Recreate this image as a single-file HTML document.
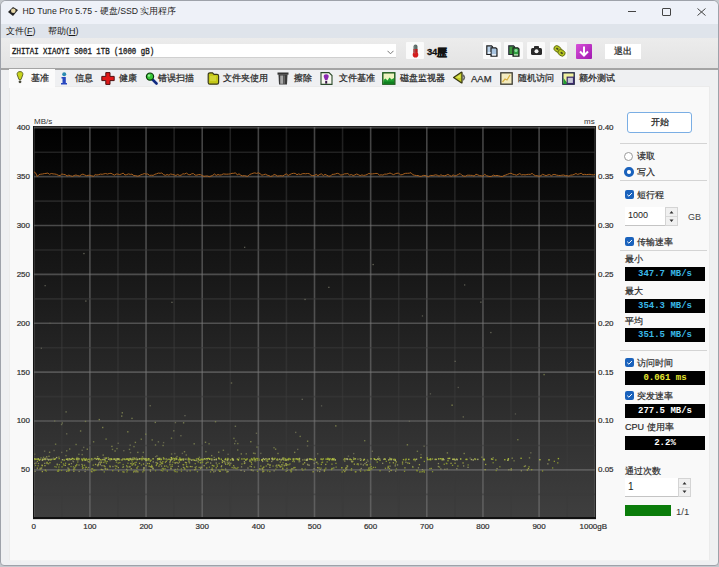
<!DOCTYPE html>
<html><head><meta charset="utf-8">
<style>
*{box-sizing:border-box}
html,body{margin:0;padding:0;width:719px;height:567px;overflow:hidden;background:#c4c8cd}
body{font-family:"Liberation Sans",sans-serif;font-size:9px;color:#1a1a1a;position:relative}
.a{position:absolute;white-space:nowrap}
#frame{position:absolute;left:0;top:0;width:719px;height:566px;border:1px solid #9ea2aa;border-radius:6px 6px 4px 4px;overflow:hidden;background:#eff0f2}
#title{position:absolute;left:0;top:0;width:719px;height:23px;background:#eef1f8}
#menu{position:absolute;left:0;top:23px;width:719px;height:14px;background:#dfe4eb}
#tool{position:absolute;left:0;top:37px;width:719px;height:30px;background:linear-gradient(#ececec,#e3e3e3)}
#tabline{position:absolute;left:0;top:66.5px;width:719px;height:2px;background:#a4a4a4}
.tbtn{position:absolute;top:42px;height:17px;background:#fafafa;border-radius:1px}
.yl{position:absolute;left:0;width:30px;text-align:right;font-size:8px;color:#2e2e2e;-webkit-text-stroke:0.2px #2e2e2e}
.yr{position:absolute;left:598px;font-size:8px;color:#2e2e2e;-webkit-text-stroke:0.2px #2e2e2e}
.xl{position:absolute;top:522px;width:60px;text-align:center;font-size:8px;color:#2e2e2e;-webkit-text-stroke:0.2px #2e2e2e}
.box{position:absolute;left:625px;width:80px;height:14px;background:#000;font-family:"Liberation Mono",monospace;font-weight:bold;font-size:9px;text-align:center;line-height:14px}
.lbl{position:absolute;left:625px;font-size:9px;color:#2a2a2a;-webkit-text-stroke:0.2px #2a2a2a}
.cb{position:absolute;left:625px;width:9px;height:9px;background:#1a62bc;border-radius:2px}
.cb svg{position:absolute;left:0;top:0}
.sep{position:absolute;left:620px;width:87px;height:1px;background:#d4d4d4}
.tab{position:absolute;top:72px;font-size:9px;color:#2a2a2a;-webkit-text-stroke:0.25px #2a2a2a}
</style></head><body>
<div id="frame">
<div id="title"></div>
<div id="menu"></div>
<div id="tool"></div>
<div id="tabline"></div>
</div>
<!-- title -->
<svg class="a" style="left:7px;top:6px" width="12" height="11" viewBox="0 0 12 11"><path d="M1 6 L6 1 L11 4 L6 10 Z" fill="#222"/><circle cx="6.3" cy="4.8" r="2.3" fill="#e8d8a8"/></svg>
<div class="a" style="left:22.5px;top:6.3px;font-size:8.7px;color:#1e1e1e">HD Tune Pro 5.75 - 硬盘/SSD 实用程序</div>
<div class="a" style="left:628px;top:11px;width:8px;height:1px;background:#444"></div>
<div class="a" style="left:662px;top:8px;width:9px;height:8px;border:1px solid #444;border-radius:1px"></div>
<svg class="a" style="left:697px;top:8px" width="9" height="8"><path d="M0.5 0.5 L8.5 7.5 M8.5 0.5 L0.5 7.5" stroke="#444" stroke-width="1"/></svg>
<!-- menu -->
<div class="a" style="left:6px;top:24.5px;font-size:9px">文件(<u>F</u>)</div>
<div class="a" style="left:48px;top:24.5px;font-size:9px">帮助(<u>H</u>)</div>
<!-- toolbar -->
<div class="a" style="left:10px;top:44px;width:386px;height:14px;background:#fff;border-bottom:1px solid #d0d0d0"></div>
<div class="a" style="left:11.5px;top:47px;font-family:'Liberation Mono',monospace;font-size:9px;transform:scaleX(0.822);transform-origin:0 0;color:#222;-webkit-text-stroke:0.35px #222">ZHITAI XIAOYI S001 1TB (1000 gB)</div>
<svg class="a" style="left:387px;top:50px" width="7" height="5"><path d="M0.5 0.8 L3.5 3.8 L6.5 0.8" stroke="#777" fill="none"/></svg>
<div class="tbtn" style="left:406px;width:18px"></div>
<svg class="a" style="left:411px;top:44px" width="9" height="14" viewBox="0 0 9 14"><rect x="2.5" y="0.5" width="4" height="9" rx="2" fill="#5a6a66"/><rect x="2.5" y="5" width="4" height="5" fill="#c01818"/><circle cx="4.5" cy="10.8" r="2.8" fill="#d41c1c"/><rect x="3.3" y="1.5" width="1" height="8" fill="#8a9a96" opacity="0.6"/></svg>
<div class="a" style="left:427px;top:46px;font-weight:bold;font-size:9.5px;color:#111;letter-spacing:-0.2px;-webkit-text-stroke:0.3px #111">34</div>
<div class="a" style="left:436.5px;top:45.5px;font-size:10px;font-weight:bold;color:#111;-webkit-text-stroke:0.45px #111">歷</div>
<div class="tbtn" style="left:483px;width:18px"></div>
<svg class="a" style="left:486px;top:45px" width="12" height="12" viewBox="0 0 12 12"><path d="M0.8 0.8 H5.5 L6.5 1.8 V9.5 H0.8 Z" fill="#b8d0e8" stroke="#222" stroke-width="1.2"/><path d="M5 2.8 H9.8 L11 4 V11.2 H5 Z" fill="#a8c4e0" stroke="#222" stroke-width="1.2"/><rect x="6" y="9.3" width="4" height="1.2" fill="#fff"/><rect x="1.8" y="7.3" width="3" height="1" fill="#fff"/></svg>
<div class="tbtn" style="left:504px;width:19px"></div>
<svg class="a" style="left:508px;top:45px" width="12" height="12" viewBox="0 0 12 12"><path d="M0.8 0.8 H5.5 L6.5 1.8 V9.5 H0.8 Z" fill="#3c9a3c" stroke="#2a2a3a" stroke-width="1.2"/><path d="M5 2.8 H9.8 L11 4 V11.2 H5 Z" fill="#30a040" stroke="#222" stroke-width="1.2"/><circle cx="8" cy="5.5" r="1.5" fill="#8fe0a0"/><rect x="6" y="9.3" width="4" height="1.2" fill="#cfe8c8"/></svg>
<div class="tbtn" style="left:527px;width:18px"></div>
<svg class="a" style="left:531px;top:46px" width="11" height="9" viewBox="0 0 11 9"><rect x="0" y="2" width="11" height="7" rx="1.5" fill="#2a2a2a"/><rect x="3" y="0" width="5" height="3" rx="0.8" fill="#2a2a2a"/><circle cx="5.5" cy="5.3" r="2" fill="#f4f4f4"/></svg>
<div class="tbtn" style="left:550px;width:17px"></div>
<svg class="a" style="left:553px;top:45px" width="13" height="12" viewBox="0 0 13 12"><ellipse cx="4.5" cy="4" rx="3.8" ry="3" transform="rotate(35 4.5 4)" fill="#b4c420" stroke="#5a6410" stroke-width="0.8"/><ellipse cx="8.5" cy="7.8" rx="3.8" ry="3" transform="rotate(35 8.5 7.8)" fill="#b4c420" stroke="#5a6410" stroke-width="0.8"/><ellipse cx="4.3" cy="3.8" rx="1.4" ry="0.9" transform="rotate(35 4.3 3.8)" fill="#4a4a20"/><ellipse cx="8.7" cy="8" rx="1.4" ry="0.9" transform="rotate(35 8.7 8)" fill="#4a4a20"/></svg>
<div class="a" style="left:576px;top:44px;width:16px;height:15px;background:linear-gradient(135deg,#d850d8,#a018b0);border-radius:1px"></div>
<svg class="a" style="left:578px;top:45px" width="12" height="13" viewBox="0 0 12 13"><path d="M6 1.5 V10 M2 6.5 L6 10.5 L10 6.5" stroke="#fff" stroke-width="2" fill="none"/></svg>
<div class="a" style="left:605px;top:44px;width:36px;height:15px;background:#fff;text-align:center;line-height:15px;font-size:9px;color:#222;-webkit-text-stroke:0.25px #222">退出</div>
<!-- page borders -->
<div class="a" style="left:9px;top:86px;width:701px;height:475px;background:#f9f9f9;border:1px solid #ebebeb;border-bottom-color:#f2f2f2"></div>
<div class="a" style="left:9px;top:68.5px;width:46px;height:19px;background:#fbfbfb"></div>
<!-- tabs -->
<svg class="a" style="left:16px;top:71px" width="8" height="13" viewBox="0 0 8 13"><path d="M4 0.6 C6.2 0.6 7.2 2 6.8 3.8 L5 8.6 H3 L1.2 3.8 C0.8 2 1.8 0.6 4 0.6 Z" fill="#c8d41c" stroke="#555a20" stroke-width="0.9"/><circle cx="4" cy="10.8" r="1.4" fill="#4a4a3a"/></svg>
<div class="tab" style="left:31px">基准</div>
<svg class="a" style="left:60px;top:72px" width="8" height="13" viewBox="0 0 8 13"><circle cx="4.2" cy="2.3" r="2" fill="#2a8ab0"/><path d="M1.5 5 H5.8 V11 H7 V12.5 H1 V11 H2.5 V6.5 H1.5 Z" fill="#2848c0"/></svg>
<div class="tab" style="left:75px">信息</div>
<svg class="a" style="left:101px;top:72px" width="14" height="13" viewBox="0 0 14 13"><path d="M4.8 0.6 H9 V4.4 H13.2 V8.6 H9 V12.4 H4.8 V8.6 H0.8 V4.4 H4.8 Z" fill="#e01818" stroke="#501010" stroke-width="1"/></svg>
<div class="tab" style="left:119px">健康</div>
<svg class="a" style="left:145px;top:72px" width="13" height="13" viewBox="0 0 13 13"><line x1="7" y1="7" x2="11.5" y2="11.5" stroke="#102a80" stroke-width="2.6" stroke-linecap="round"/><circle cx="5" cy="4.6" r="3.6" fill="#38c838" stroke="#0a3a0a" stroke-width="1.2"/><circle cx="4" cy="3.6" r="1.2" fill="#9af09a"/></svg>
<div class="tab" style="left:158px">错误扫描</div>
<svg class="a" style="left:207px;top:72px" width="13" height="13" viewBox="0 0 13 13"><path d="M1.2 2.5 Q1.2 0.8 3 0.8 H5.5 L7 2.4 H10 Q11.6 2.4 11.6 4 V10.6 Q11.6 12.2 10 12.2 H2.8 Q1.2 12.2 1.2 10.6 Z" fill="#c4c818" stroke="#3a3a1a" stroke-width="1.2"/><rect x="3" y="4" width="6" height="5" fill="#d8dc40" opacity="0.7"/></svg>
<div class="tab" style="left:223px">文件夹使用</div>
<svg class="a" style="left:277px;top:72px" width="12" height="13" viewBox="0 0 12 13"><rect x="0.5" y="0.5" width="11" height="2.2" fill="#333"/><path d="M1.5 2.5 H10.5 L10 12.5 H2 Z" fill="#3a3a3a"/><rect x="3.2" y="3.5" width="3" height="8.3" fill="#a8a8a8"/><rect x="6.5" y="3.5" width="1.5" height="8.3" fill="#666"/></svg>
<div class="tab" style="left:294px">擦除</div>
<svg class="a" style="left:320px;top:72px" width="13" height="13" viewBox="0 0 13 13"><path d="M1 0.6 H9 L12 3.6 V12.4 H1 Z" fill="#f8f8f0" stroke="#2a4a2a" stroke-width="1.1"/><path d="M6.2 2.2 C8.3 2.2 9 3.6 8.6 5 L7.3 8.2 H5.1 L3.8 5 C3.4 3.6 4.1 2.2 6.2 2.2 Z" fill="#8a2ab0"/><rect x="5.2" y="9" width="2" height="2.6" fill="#3a1a4a"/></svg>
<div class="tab" style="left:339px">文件基准</div>
<svg class="a" style="left:382px;top:72px" width="14" height="13" viewBox="0 0 14 13"><rect x="0.8" y="0.8" width="12" height="11.4" fill="#eef4c0" stroke="#1a5a1a" stroke-width="1.4"/><path d="M1.5 12 V8 L3.5 6.5 L5.5 8.5 L7.5 5.5 L9.5 7.5 L12 6 V12 Z" fill="#20a030"/><rect x="1.5" y="9.5" width="10.5" height="2.5" fill="#108020"/></svg>
<div class="tab" style="left:400px">磁盘监视器</div>
<svg class="a" style="left:452px;top:71px" width="16" height="14" viewBox="0 0 16 14"><path d="M1.6 6.5 L9.3 1.3 Q10 1 10 1.8 V11.4 Q10 12.2 9.3 11.8 Z" fill="#c4cc28" stroke="#3a3a14" stroke-width="1.3" stroke-linejoin="round"/><path d="M3.5 6.5 L8.5 3.5 V7 Z" fill="#e4ec60" opacity="0.8"/><path d="M10.8 4 Q14 6.5 10.8 9.2" stroke="#666" stroke-width="1.6" fill="none"/></svg>
<div class="tab" style="left:471px;top:73px;font-weight:normal;font-size:9.5px;color:#333">AAM</div>
<svg class="a" style="left:500px;top:72px" width="13" height="13" viewBox="0 0 13 13"><rect x="0.8" y="0.8" width="11.4" height="11.4" fill="#f4ecc0" stroke="#3a3a30" stroke-width="1.3"/><path d="M2.5 10 L5 7 L7 8 L10 3" stroke="#d8b040" stroke-width="1.2" fill="none"/></svg>
<div class="tab" style="left:518px">随机访问</div>
<svg class="a" style="left:562px;top:72px" width="13" height="13" viewBox="0 0 13 13"><rect x="0.8" y="0.8" width="11.4" height="11.4" fill="#f0f0a0" stroke="#1a2040" stroke-width="1.3"/><path d="M1.5 3 V12 H6 L1.5 6 Z" fill="#20a030"/><rect x="5.2" y="5.2" width="6.3" height="6.3" fill="#c8c8d8" stroke="#3a2a6a" stroke-width="1.2"/></svg>
<div class="tab" style="left:579px">额外测试</div>
<!-- chart -->
<svg width="719" height="567" style="position:absolute;left:0;top:0">
<defs><linearGradient id="bg" x1="0" y1="0" x2="0" y2="1"><stop offset="0" stop-color="#000"/><stop offset="1" stop-color="#3f3f3f"/></linearGradient></defs>
<rect x="33" y="126" width="563" height="393" fill="url(#bg)"/>
<line x1="33.75" y1="126" x2="33.75" y2="519" stroke="#7a7a7a" stroke-width="1.6" stroke-opacity="0.55"/>
<line x1="61.83" y1="126" x2="61.83" y2="519" stroke="#3a3a3a" stroke-width="1.6" stroke-opacity="0.55"/>
<line x1="89.90" y1="126" x2="89.90" y2="519" stroke="#7a7a7a" stroke-width="1.6" stroke-opacity="0.55"/>
<line x1="117.97" y1="126" x2="117.97" y2="519" stroke="#3a3a3a" stroke-width="1.6" stroke-opacity="0.55"/>
<line x1="146.05" y1="126" x2="146.05" y2="519" stroke="#7a7a7a" stroke-width="1.6" stroke-opacity="0.55"/>
<line x1="174.12" y1="126" x2="174.12" y2="519" stroke="#3a3a3a" stroke-width="1.6" stroke-opacity="0.55"/>
<line x1="202.20" y1="126" x2="202.20" y2="519" stroke="#7a7a7a" stroke-width="1.6" stroke-opacity="0.55"/>
<line x1="230.28" y1="126" x2="230.28" y2="519" stroke="#3a3a3a" stroke-width="1.6" stroke-opacity="0.55"/>
<line x1="258.35" y1="126" x2="258.35" y2="519" stroke="#7a7a7a" stroke-width="1.6" stroke-opacity="0.55"/>
<line x1="286.43" y1="126" x2="286.43" y2="519" stroke="#3a3a3a" stroke-width="1.6" stroke-opacity="0.55"/>
<line x1="314.50" y1="126" x2="314.50" y2="519" stroke="#7a7a7a" stroke-width="1.6" stroke-opacity="0.55"/>
<line x1="342.57" y1="126" x2="342.57" y2="519" stroke="#3a3a3a" stroke-width="1.6" stroke-opacity="0.55"/>
<line x1="370.65" y1="126" x2="370.65" y2="519" stroke="#7a7a7a" stroke-width="1.6" stroke-opacity="0.55"/>
<line x1="398.73" y1="126" x2="398.73" y2="519" stroke="#3a3a3a" stroke-width="1.6" stroke-opacity="0.55"/>
<line x1="426.80" y1="126" x2="426.80" y2="519" stroke="#7a7a7a" stroke-width="1.6" stroke-opacity="0.55"/>
<line x1="454.88" y1="126" x2="454.88" y2="519" stroke="#3a3a3a" stroke-width="1.6" stroke-opacity="0.55"/>
<line x1="482.95" y1="126" x2="482.95" y2="519" stroke="#7a7a7a" stroke-width="1.6" stroke-opacity="0.55"/>
<line x1="511.02" y1="126" x2="511.02" y2="519" stroke="#3a3a3a" stroke-width="1.6" stroke-opacity="0.55"/>
<line x1="539.10" y1="126" x2="539.10" y2="519" stroke="#7a7a7a" stroke-width="1.6" stroke-opacity="0.55"/>
<line x1="567.17" y1="126" x2="567.17" y2="519" stroke="#3a3a3a" stroke-width="1.6" stroke-opacity="0.55"/>
<line x1="595.25" y1="126" x2="595.25" y2="519" stroke="#7a7a7a" stroke-width="1.6" stroke-opacity="0.55"/>
<line x1="33" y1="518.80" x2="596" y2="518.80" stroke="#7a7a7a" stroke-width="1.6" stroke-opacity="0.55"/>
<line x1="33" y1="494.36" x2="596" y2="494.36" stroke="#3a3a3a" stroke-width="1.6" stroke-opacity="0.55"/>
<line x1="33" y1="469.92" x2="596" y2="469.92" stroke="#7a7a7a" stroke-width="1.6" stroke-opacity="0.55"/>
<line x1="33" y1="445.49" x2="596" y2="445.49" stroke="#3a3a3a" stroke-width="1.6" stroke-opacity="0.55"/>
<line x1="33" y1="421.05" x2="596" y2="421.05" stroke="#7a7a7a" stroke-width="1.6" stroke-opacity="0.55"/>
<line x1="33" y1="396.61" x2="596" y2="396.61" stroke="#3a3a3a" stroke-width="1.6" stroke-opacity="0.55"/>
<line x1="33" y1="372.17" x2="596" y2="372.17" stroke="#7a7a7a" stroke-width="1.6" stroke-opacity="0.55"/>
<line x1="33" y1="347.74" x2="596" y2="347.74" stroke="#3a3a3a" stroke-width="1.6" stroke-opacity="0.55"/>
<line x1="33" y1="323.30" x2="596" y2="323.30" stroke="#7a7a7a" stroke-width="1.6" stroke-opacity="0.55"/>
<line x1="33" y1="298.86" x2="596" y2="298.86" stroke="#3a3a3a" stroke-width="1.6" stroke-opacity="0.55"/>
<line x1="33" y1="274.42" x2="596" y2="274.42" stroke="#7a7a7a" stroke-width="1.6" stroke-opacity="0.55"/>
<line x1="33" y1="249.99" x2="596" y2="249.99" stroke="#3a3a3a" stroke-width="1.6" stroke-opacity="0.55"/>
<line x1="33" y1="225.55" x2="596" y2="225.55" stroke="#7a7a7a" stroke-width="1.6" stroke-opacity="0.55"/>
<line x1="33" y1="201.11" x2="596" y2="201.11" stroke="#3a3a3a" stroke-width="1.6" stroke-opacity="0.55"/>
<line x1="33" y1="176.67" x2="596" y2="176.67" stroke="#7a7a7a" stroke-width="1.6" stroke-opacity="0.55"/>
<line x1="33" y1="152.24" x2="596" y2="152.24" stroke="#3a3a3a" stroke-width="1.6" stroke-opacity="0.55"/>
<line x1="33" y1="127.80" x2="596" y2="127.80" stroke="#7a7a7a" stroke-width="1.6" stroke-opacity="0.55"/>
</svg>
<svg width="719" height="567" style="position:absolute;left:0;top:0">
<rect x="271.3" y="458.1" width="1.4" height="1.4" fill="#8c9a30"/>
<rect x="130.7" y="458.9" width="1.4" height="1.4" fill="#8c9a30"/>
<rect x="83.2" y="457.8" width="1.4" height="1.4" fill="#9aaa34"/>
<rect x="346.4" y="458.1" width="1.4" height="1.4" fill="#a8aa70"/>
<rect x="116.4" y="458.8" width="1.4" height="1.4" fill="#8c9a30"/>
<rect x="442.3" y="458.6" width="1.4" height="1.4" fill="#8c9a30"/>
<rect x="306.3" y="459.4" width="1.4" height="1.4" fill="#a8aa70"/>
<rect x="377.5" y="458.6" width="1.4" height="1.4" fill="#9aaa34"/>
<rect x="405.4" y="458.5" width="1.4" height="1.4" fill="#9aaa34"/>
<rect x="329.4" y="458.1" width="1.4" height="1.4" fill="#9aaa34"/>
<rect x="34.0" y="458.1" width="1.4" height="1.4" fill="#a8aa70"/>
<rect x="254.1" y="458.9" width="1.4" height="1.4" fill="#8c9a30"/>
<rect x="442.5" y="458.2" width="1.4" height="1.4" fill="#a8aa70"/>
<rect x="431.7" y="458.3" width="1.4" height="1.4" fill="#8c9a30"/>
<rect x="404.9" y="459.2" width="1.4" height="1.4" fill="#8c9a30"/>
<rect x="268.6" y="458.5" width="1.4" height="1.4" fill="#8c9a30"/>
<rect x="253.8" y="459.9" width="1.4" height="1.4" fill="#9aaa34"/>
<rect x="175.4" y="457.6" width="1.4" height="1.4" fill="#b0bc48"/>
<rect x="557.7" y="457.9" width="1.4" height="1.4" fill="#9aaa34"/>
<rect x="55.9" y="456.9" width="1.4" height="1.4" fill="#a8aa70"/>
<rect x="169.3" y="458.8" width="1.4" height="1.4" fill="#9aaa34"/>
<rect x="72.7" y="458.2" width="1.4" height="1.4" fill="#8c9a30"/>
<rect x="41.9" y="458.8" width="1.4" height="1.4" fill="#a8aa70"/>
<rect x="470.7" y="458.8" width="1.4" height="1.4" fill="#a8aa70"/>
<rect x="129.7" y="457.8" width="1.4" height="1.4" fill="#8c9a30"/>
<rect x="414.6" y="459.1" width="1.4" height="1.4" fill="#8c9a30"/>
<rect x="394.4" y="458.8" width="1.4" height="1.4" fill="#9aaa34"/>
<rect x="88.3" y="458.6" width="1.4" height="1.4" fill="#b0bc48"/>
<rect x="158.9" y="458.6" width="1.4" height="1.4" fill="#a8aa70"/>
<rect x="187.8" y="457.6" width="1.4" height="1.4" fill="#9aaa34"/>
<rect x="100.1" y="459.0" width="1.4" height="1.4" fill="#9aaa34"/>
<rect x="180.9" y="459.2" width="1.4" height="1.4" fill="#8c9a30"/>
<rect x="427.0" y="458.9" width="1.4" height="1.4" fill="#9aaa34"/>
<rect x="126.3" y="458.4" width="1.4" height="1.4" fill="#8c9a30"/>
<rect x="82.2" y="459.0" width="1.4" height="1.4" fill="#8c9a30"/>
<rect x="283.0" y="458.4" width="1.4" height="1.4" fill="#b0bc48"/>
<rect x="539.2" y="459.0" width="1.4" height="1.4" fill="#b0bc48"/>
<rect x="201.2" y="459.1" width="1.4" height="1.4" fill="#9aaa34"/>
<rect x="271.6" y="457.4" width="1.4" height="1.4" fill="#8c9a30"/>
<rect x="218.5" y="458.2" width="1.4" height="1.4" fill="#9aaa34"/>
<rect x="334.5" y="459.1" width="1.4" height="1.4" fill="#9aaa34"/>
<rect x="75.9" y="458.1" width="1.4" height="1.4" fill="#b0bc48"/>
<rect x="237.7" y="459.1" width="1.4" height="1.4" fill="#9aaa34"/>
<rect x="306.1" y="458.9" width="1.4" height="1.4" fill="#b0bc48"/>
<rect x="349.4" y="458.5" width="1.4" height="1.4" fill="#a8aa70"/>
<rect x="226.9" y="457.8" width="1.4" height="1.4" fill="#8c9a30"/>
<rect x="213.6" y="459.0" width="1.4" height="1.4" fill="#a8aa70"/>
<rect x="383.3" y="458.6" width="1.4" height="1.4" fill="#a8aa70"/>
<rect x="138.9" y="458.4" width="1.4" height="1.4" fill="#8c9a30"/>
<rect x="105.2" y="457.4" width="1.4" height="1.4" fill="#9aaa34"/>
<rect x="179.1" y="459.0" width="1.4" height="1.4" fill="#8c9a30"/>
<rect x="306.7" y="458.5" width="1.4" height="1.4" fill="#a8aa70"/>
<rect x="201.9" y="458.7" width="1.4" height="1.4" fill="#b0bc48"/>
<rect x="333.3" y="457.9" width="1.4" height="1.4" fill="#9aaa34"/>
<rect x="370.3" y="458.2" width="1.4" height="1.4" fill="#b0bc48"/>
<rect x="158.4" y="457.7" width="1.4" height="1.4" fill="#9aaa34"/>
<rect x="91.0" y="458.9" width="1.4" height="1.4" fill="#9aaa34"/>
<rect x="393.1" y="459.0" width="1.4" height="1.4" fill="#a8aa70"/>
<rect x="168.2" y="458.6" width="1.4" height="1.4" fill="#9aaa34"/>
<rect x="127.8" y="459.3" width="1.4" height="1.4" fill="#b0bc48"/>
<rect x="117.3" y="458.7" width="1.4" height="1.4" fill="#a8aa70"/>
<rect x="102.0" y="458.9" width="1.4" height="1.4" fill="#9aaa34"/>
<rect x="231.6" y="457.9" width="1.4" height="1.4" fill="#b0bc48"/>
<rect x="277.2" y="459.2" width="1.4" height="1.4" fill="#8c9a30"/>
<rect x="85.7" y="458.2" width="1.4" height="1.4" fill="#9aaa34"/>
<rect x="145.7" y="459.8" width="1.4" height="1.4" fill="#9aaa34"/>
<rect x="448.9" y="457.7" width="1.4" height="1.4" fill="#b0bc48"/>
<rect x="298.7" y="459.2" width="1.4" height="1.4" fill="#b0bc48"/>
<rect x="289.7" y="458.5" width="1.4" height="1.4" fill="#9aaa34"/>
<rect x="124.5" y="458.8" width="1.4" height="1.4" fill="#8c9a30"/>
<rect x="389.6" y="458.1" width="1.4" height="1.4" fill="#9aaa34"/>
<rect x="328.6" y="459.1" width="1.4" height="1.4" fill="#b0bc48"/>
<rect x="197.4" y="457.9" width="1.4" height="1.4" fill="#8c9a30"/>
<rect x="193.6" y="459.5" width="1.4" height="1.4" fill="#b0bc48"/>
<rect x="334.6" y="459.2" width="1.4" height="1.4" fill="#a8aa70"/>
<rect x="48.3" y="458.7" width="1.4" height="1.4" fill="#a8aa70"/>
<rect x="97.8" y="458.0" width="1.4" height="1.4" fill="#a8aa70"/>
<rect x="282.2" y="457.5" width="1.4" height="1.4" fill="#a8aa70"/>
<rect x="90.8" y="458.2" width="1.4" height="1.4" fill="#9aaa34"/>
<rect x="52.5" y="458.5" width="1.4" height="1.4" fill="#9aaa34"/>
<rect x="394.4" y="459.0" width="1.4" height="1.4" fill="#9aaa34"/>
<rect x="296.1" y="458.0" width="1.4" height="1.4" fill="#b0bc48"/>
<rect x="495.1" y="459.3" width="1.4" height="1.4" fill="#8c9a30"/>
<rect x="314.1" y="459.3" width="1.4" height="1.4" fill="#8c9a30"/>
<rect x="483.6" y="458.6" width="1.4" height="1.4" fill="#8c9a30"/>
<rect x="199.6" y="459.6" width="1.4" height="1.4" fill="#8c9a30"/>
<rect x="148.3" y="458.4" width="1.4" height="1.4" fill="#8c9a30"/>
<rect x="103.3" y="458.8" width="1.4" height="1.4" fill="#a8aa70"/>
<rect x="84.7" y="459.4" width="1.4" height="1.4" fill="#8c9a30"/>
<rect x="139.1" y="458.1" width="1.4" height="1.4" fill="#9aaa34"/>
<rect x="84.2" y="459.2" width="1.4" height="1.4" fill="#b0bc48"/>
<rect x="94.3" y="457.8" width="1.4" height="1.4" fill="#b0bc48"/>
<rect x="297.7" y="458.5" width="1.4" height="1.4" fill="#9aaa34"/>
<rect x="46.5" y="458.4" width="1.4" height="1.4" fill="#a8aa70"/>
<rect x="110.7" y="458.3" width="1.4" height="1.4" fill="#b0bc48"/>
<rect x="520.4" y="457.6" width="1.4" height="1.4" fill="#9aaa34"/>
<rect x="104.3" y="458.4" width="1.4" height="1.4" fill="#a8aa70"/>
<rect x="278.9" y="458.5" width="1.4" height="1.4" fill="#a8aa70"/>
<rect x="144.0" y="458.7" width="1.4" height="1.4" fill="#8c9a30"/>
<rect x="128.9" y="458.7" width="1.4" height="1.4" fill="#b0bc48"/>
<rect x="246.5" y="458.3" width="1.4" height="1.4" fill="#9aaa34"/>
<rect x="203.7" y="458.0" width="1.4" height="1.4" fill="#a8aa70"/>
<rect x="332.8" y="459.0" width="1.4" height="1.4" fill="#b0bc48"/>
<rect x="180.5" y="458.8" width="1.4" height="1.4" fill="#8c9a30"/>
<rect x="413.1" y="458.9" width="1.4" height="1.4" fill="#9aaa34"/>
<rect x="507.7" y="458.1" width="1.4" height="1.4" fill="#b0bc48"/>
<rect x="211.1" y="459.2" width="1.4" height="1.4" fill="#a8aa70"/>
<rect x="304.0" y="458.9" width="1.4" height="1.4" fill="#8c9a30"/>
<rect x="548.3" y="459.2" width="1.4" height="1.4" fill="#b0bc48"/>
<rect x="266.7" y="459.2" width="1.4" height="1.4" fill="#8c9a30"/>
<rect x="374.0" y="458.6" width="1.4" height="1.4" fill="#b0bc48"/>
<rect x="322.5" y="458.2" width="1.4" height="1.4" fill="#9aaa34"/>
<rect x="73.8" y="458.6" width="1.4" height="1.4" fill="#8c9a30"/>
<rect x="346.9" y="458.7" width="1.4" height="1.4" fill="#a8aa70"/>
<rect x="254.6" y="459.0" width="1.4" height="1.4" fill="#b0bc48"/>
<rect x="287.5" y="458.9" width="1.4" height="1.4" fill="#b0bc48"/>
<rect x="47.9" y="459.2" width="1.4" height="1.4" fill="#a8aa70"/>
<rect x="429.9" y="459.0" width="1.4" height="1.4" fill="#b0bc48"/>
<rect x="426.6" y="457.3" width="1.4" height="1.4" fill="#9aaa34"/>
<rect x="452.5" y="458.7" width="1.4" height="1.4" fill="#a8aa70"/>
<rect x="165.5" y="458.4" width="1.4" height="1.4" fill="#a8aa70"/>
<rect x="109.5" y="458.5" width="1.4" height="1.4" fill="#8c9a30"/>
<rect x="350.7" y="459.0" width="1.4" height="1.4" fill="#8c9a30"/>
<rect x="115.0" y="459.0" width="1.4" height="1.4" fill="#8c9a30"/>
<rect x="384.4" y="458.6" width="1.4" height="1.4" fill="#a8aa70"/>
<rect x="224.9" y="457.9" width="1.4" height="1.4" fill="#8c9a30"/>
<rect x="158.9" y="457.9" width="1.4" height="1.4" fill="#b0bc48"/>
<rect x="178.0" y="459.2" width="1.4" height="1.4" fill="#8c9a30"/>
<rect x="133.4" y="457.4" width="1.4" height="1.4" fill="#9aaa34"/>
<rect x="363.7" y="458.7" width="1.4" height="1.4" fill="#b0bc48"/>
<rect x="257.0" y="458.0" width="1.4" height="1.4" fill="#9aaa34"/>
<rect x="118.2" y="458.2" width="1.4" height="1.4" fill="#b0bc48"/>
<rect x="287.9" y="458.9" width="1.4" height="1.4" fill="#8c9a30"/>
<rect x="474.0" y="458.1" width="1.4" height="1.4" fill="#9aaa34"/>
<rect x="268.6" y="458.1" width="1.4" height="1.4" fill="#a8aa70"/>
<rect x="256.5" y="459.4" width="1.4" height="1.4" fill="#8c9a30"/>
<rect x="227.4" y="458.1" width="1.4" height="1.4" fill="#8c9a30"/>
<rect x="258.3" y="458.6" width="1.4" height="1.4" fill="#9aaa34"/>
<rect x="276.3" y="459.1" width="1.4" height="1.4" fill="#a8aa70"/>
<rect x="466.1" y="458.7" width="1.4" height="1.4" fill="#b0bc48"/>
<rect x="145.7" y="458.2" width="1.4" height="1.4" fill="#b0bc48"/>
<rect x="182.3" y="458.4" width="1.4" height="1.4" fill="#b0bc48"/>
<rect x="378.8" y="458.2" width="1.4" height="1.4" fill="#a8aa70"/>
<rect x="263.7" y="458.8" width="1.4" height="1.4" fill="#b0bc48"/>
<rect x="274.3" y="457.7" width="1.4" height="1.4" fill="#8c9a30"/>
<rect x="78.0" y="458.8" width="1.4" height="1.4" fill="#9aaa34"/>
<rect x="224.5" y="458.9" width="1.4" height="1.4" fill="#b0bc48"/>
<rect x="126.5" y="458.4" width="1.4" height="1.4" fill="#b0bc48"/>
<rect x="460.0" y="458.3" width="1.4" height="1.4" fill="#b0bc48"/>
<rect x="456.0" y="458.5" width="1.4" height="1.4" fill="#b0bc48"/>
<rect x="447.5" y="457.8" width="1.4" height="1.4" fill="#b0bc48"/>
<rect x="78.2" y="458.2" width="1.4" height="1.4" fill="#8c9a30"/>
<rect x="84.9" y="459.3" width="1.4" height="1.4" fill="#a8aa70"/>
<rect x="211.1" y="458.2" width="1.4" height="1.4" fill="#8c9a30"/>
<rect x="292.9" y="458.7" width="1.4" height="1.4" fill="#9aaa34"/>
<rect x="249.3" y="459.4" width="1.4" height="1.4" fill="#b0bc48"/>
<rect x="308.8" y="458.4" width="1.4" height="1.4" fill="#a8aa70"/>
<rect x="118.9" y="459.1" width="1.4" height="1.4" fill="#8c9a30"/>
<rect x="202.2" y="459.0" width="1.4" height="1.4" fill="#9aaa34"/>
<rect x="281.3" y="458.7" width="1.4" height="1.4" fill="#b0bc48"/>
<rect x="128.0" y="459.3" width="1.4" height="1.4" fill="#9aaa34"/>
<rect x="197.8" y="458.4" width="1.4" height="1.4" fill="#b0bc48"/>
<rect x="147.9" y="458.7" width="1.4" height="1.4" fill="#8c9a30"/>
<rect x="245.1" y="459.3" width="1.4" height="1.4" fill="#b0bc48"/>
<rect x="288.3" y="457.8" width="1.4" height="1.4" fill="#9aaa34"/>
<rect x="287.1" y="458.8" width="1.4" height="1.4" fill="#9aaa34"/>
<rect x="147.9" y="458.1" width="1.4" height="1.4" fill="#b0bc48"/>
<rect x="447.3" y="460.0" width="1.4" height="1.4" fill="#8c9a30"/>
<rect x="163.2" y="458.2" width="1.4" height="1.4" fill="#b0bc48"/>
<rect x="109.7" y="459.0" width="1.4" height="1.4" fill="#8c9a30"/>
<rect x="173.7" y="458.0" width="1.4" height="1.4" fill="#9aaa34"/>
<rect x="141.0" y="457.8" width="1.4" height="1.4" fill="#8c9a30"/>
<rect x="465.3" y="458.7" width="1.4" height="1.4" fill="#9aaa34"/>
<rect x="77.3" y="457.7" width="1.4" height="1.4" fill="#b0bc48"/>
<rect x="43.7" y="458.3" width="1.4" height="1.4" fill="#a8aa70"/>
<rect x="143.2" y="457.8" width="1.4" height="1.4" fill="#a8aa70"/>
<rect x="116.5" y="458.8" width="1.4" height="1.4" fill="#9aaa34"/>
<rect x="384.0" y="458.2" width="1.4" height="1.4" fill="#9aaa34"/>
<rect x="394.5" y="459.1" width="1.4" height="1.4" fill="#9aaa34"/>
<rect x="377.1" y="458.2" width="1.4" height="1.4" fill="#a8aa70"/>
<rect x="187.8" y="458.4" width="1.4" height="1.4" fill="#8c9a30"/>
<rect x="507.1" y="459.6" width="1.4" height="1.4" fill="#a8aa70"/>
<rect x="325.4" y="458.4" width="1.4" height="1.4" fill="#9aaa34"/>
<rect x="206.7" y="458.1" width="1.4" height="1.4" fill="#a8aa70"/>
<rect x="413.7" y="458.5" width="1.4" height="1.4" fill="#8c9a30"/>
<rect x="360.2" y="458.8" width="1.4" height="1.4" fill="#8c9a30"/>
<rect x="128.2" y="458.2" width="1.4" height="1.4" fill="#9aaa34"/>
<rect x="86.5" y="459.2" width="1.4" height="1.4" fill="#9aaa34"/>
<rect x="261.5" y="459.1" width="1.4" height="1.4" fill="#8c9a30"/>
<rect x="207.7" y="457.7" width="1.4" height="1.4" fill="#9aaa34"/>
<rect x="200.5" y="458.5" width="1.4" height="1.4" fill="#9aaa34"/>
<rect x="170.6" y="457.0" width="1.4" height="1.4" fill="#b0bc48"/>
<rect x="375.4" y="459.0" width="1.4" height="1.4" fill="#b0bc48"/>
<rect x="116.9" y="458.1" width="1.4" height="1.4" fill="#b0bc48"/>
<rect x="321.6" y="458.9" width="1.4" height="1.4" fill="#8c9a30"/>
<rect x="137.3" y="458.6" width="1.4" height="1.4" fill="#8c9a30"/>
<rect x="441.5" y="459.1" width="1.4" height="1.4" fill="#b0bc48"/>
<rect x="206.6" y="458.5" width="1.4" height="1.4" fill="#b0bc48"/>
<rect x="173.5" y="459.4" width="1.4" height="1.4" fill="#8c9a30"/>
<rect x="328.1" y="458.3" width="1.4" height="1.4" fill="#b0bc48"/>
<rect x="122.2" y="458.2" width="1.4" height="1.4" fill="#8c9a30"/>
<rect x="98.1" y="458.9" width="1.4" height="1.4" fill="#b0bc48"/>
<rect x="393.4" y="458.6" width="1.4" height="1.4" fill="#8c9a30"/>
<rect x="131.2" y="459.1" width="1.4" height="1.4" fill="#9aaa34"/>
<rect x="272.3" y="458.3" width="1.4" height="1.4" fill="#8c9a30"/>
<rect x="195.3" y="459.8" width="1.4" height="1.4" fill="#a8aa70"/>
<rect x="434.5" y="458.7" width="1.4" height="1.4" fill="#a8aa70"/>
<rect x="95.8" y="458.5" width="1.4" height="1.4" fill="#b0bc48"/>
<rect x="306.6" y="459.0" width="1.4" height="1.4" fill="#9aaa34"/>
<rect x="245.4" y="458.8" width="1.4" height="1.4" fill="#9aaa34"/>
<rect x="280.5" y="459.2" width="1.4" height="1.4" fill="#a8aa70"/>
<rect x="261.6" y="459.2" width="1.4" height="1.4" fill="#b0bc48"/>
<rect x="309.4" y="458.2" width="1.4" height="1.4" fill="#9aaa34"/>
<rect x="189.2" y="458.9" width="1.4" height="1.4" fill="#a8aa70"/>
<rect x="428.5" y="458.8" width="1.4" height="1.4" fill="#9aaa34"/>
<rect x="477.1" y="458.7" width="1.4" height="1.4" fill="#a8aa70"/>
<rect x="89.1" y="459.3" width="1.4" height="1.4" fill="#8c9a30"/>
<rect x="227.4" y="458.8" width="1.4" height="1.4" fill="#8c9a30"/>
<rect x="150.2" y="459.6" width="1.4" height="1.4" fill="#9aaa34"/>
<rect x="306.6" y="459.1" width="1.4" height="1.4" fill="#a8aa70"/>
<rect x="34.1" y="458.7" width="1.4" height="1.4" fill="#9aaa34"/>
<rect x="265.2" y="458.1" width="1.4" height="1.4" fill="#a8aa70"/>
<rect x="107.9" y="458.5" width="1.4" height="1.4" fill="#a8aa70"/>
<rect x="142.2" y="458.1" width="1.4" height="1.4" fill="#9aaa34"/>
<rect x="136.4" y="459.0" width="1.4" height="1.4" fill="#8c9a30"/>
<rect x="327.7" y="458.1" width="1.4" height="1.4" fill="#8c9a30"/>
<rect x="134.3" y="458.3" width="1.4" height="1.4" fill="#b0bc48"/>
<rect x="254.4" y="458.5" width="1.4" height="1.4" fill="#b0bc48"/>
<rect x="267.5" y="458.5" width="1.4" height="1.4" fill="#8c9a30"/>
<rect x="174.9" y="458.1" width="1.4" height="1.4" fill="#b0bc48"/>
<rect x="343.4" y="459.0" width="1.4" height="1.4" fill="#8c9a30"/>
<rect x="179.1" y="457.4" width="1.4" height="1.4" fill="#9aaa34"/>
<rect x="276.7" y="458.4" width="1.4" height="1.4" fill="#9aaa34"/>
<rect x="37.4" y="458.7" width="1.4" height="1.4" fill="#b0bc48"/>
<rect x="256.1" y="457.8" width="1.4" height="1.4" fill="#8c9a30"/>
<rect x="162.8" y="457.2" width="1.4" height="1.4" fill="#9aaa34"/>
<rect x="131.6" y="458.4" width="1.4" height="1.4" fill="#a8aa70"/>
<rect x="35.1" y="458.6" width="1.4" height="1.4" fill="#9aaa34"/>
<rect x="128.2" y="458.9" width="1.4" height="1.4" fill="#a8aa70"/>
<rect x="443.1" y="459.0" width="1.4" height="1.4" fill="#a8aa70"/>
<rect x="157.3" y="458.4" width="1.4" height="1.4" fill="#8c9a30"/>
<rect x="170.1" y="459.5" width="1.4" height="1.4" fill="#a8aa70"/>
<rect x="171.0" y="458.4" width="1.4" height="1.4" fill="#a8aa70"/>
<rect x="492.0" y="458.6" width="1.4" height="1.4" fill="#8c9a30"/>
<rect x="353.1" y="458.4" width="1.4" height="1.4" fill="#b0bc48"/>
<rect x="483.5" y="459.2" width="1.4" height="1.4" fill="#9aaa34"/>
<rect x="158.7" y="458.6" width="1.4" height="1.4" fill="#b0bc48"/>
<rect x="295.4" y="458.4" width="1.4" height="1.4" fill="#8c9a30"/>
<rect x="232.7" y="459.4" width="1.4" height="1.4" fill="#a8aa70"/>
<rect x="65.8" y="458.6" width="1.4" height="1.4" fill="#b0bc48"/>
<rect x="104.4" y="460.1" width="1.4" height="1.4" fill="#9aaa34"/>
<rect x="160.1" y="458.8" width="1.4" height="1.4" fill="#8c9a30"/>
<rect x="81.7" y="459.8" width="1.4" height="1.4" fill="#9aaa34"/>
<rect x="189.0" y="458.4" width="1.4" height="1.4" fill="#8c9a30"/>
<rect x="253.4" y="458.5" width="1.4" height="1.4" fill="#8c9a30"/>
<rect x="54.6" y="458.1" width="1.4" height="1.4" fill="#9aaa34"/>
<rect x="145.7" y="458.1" width="1.4" height="1.4" fill="#8c9a30"/>
<rect x="130.1" y="458.4" width="1.4" height="1.4" fill="#8c9a30"/>
<rect x="285.8" y="459.3" width="1.4" height="1.4" fill="#a8aa70"/>
<rect x="141.2" y="459.1" width="1.4" height="1.4" fill="#9aaa34"/>
<rect x="58.5" y="457.9" width="1.4" height="1.4" fill="#8c9a30"/>
<rect x="331.6" y="458.8" width="1.4" height="1.4" fill="#8c9a30"/>
<rect x="174.8" y="457.9" width="1.4" height="1.4" fill="#b0bc48"/>
<rect x="105.7" y="457.5" width="1.4" height="1.4" fill="#9aaa34"/>
<rect x="44.5" y="458.8" width="1.4" height="1.4" fill="#a8aa70"/>
<rect x="204.5" y="458.4" width="1.4" height="1.4" fill="#9aaa34"/>
<rect x="192.4" y="458.9" width="1.4" height="1.4" fill="#8c9a30"/>
<rect x="50.4" y="458.6" width="1.4" height="1.4" fill="#a8aa70"/>
<rect x="285.0" y="459.3" width="1.4" height="1.4" fill="#b0bc48"/>
<rect x="111.0" y="458.7" width="1.4" height="1.4" fill="#b0bc48"/>
<rect x="314.6" y="458.2" width="1.4" height="1.4" fill="#b0bc48"/>
<rect x="152.4" y="458.1" width="1.4" height="1.4" fill="#b0bc48"/>
<rect x="354.7" y="458.1" width="1.4" height="1.4" fill="#a8aa70"/>
<rect x="147.3" y="459.3" width="1.4" height="1.4" fill="#9aaa34"/>
<rect x="156.9" y="458.1" width="1.4" height="1.4" fill="#a8aa70"/>
<rect x="292.5" y="458.3" width="1.4" height="1.4" fill="#b0bc48"/>
<rect x="183.1" y="458.4" width="1.4" height="1.4" fill="#8c9a30"/>
<rect x="283.2" y="457.4" width="1.4" height="1.4" fill="#8c9a30"/>
<rect x="284.9" y="458.3" width="1.4" height="1.4" fill="#9aaa34"/>
<rect x="507.6" y="459.0" width="1.4" height="1.4" fill="#9aaa34"/>
<rect x="231.8" y="458.9" width="1.4" height="1.4" fill="#b0bc48"/>
<rect x="71.7" y="457.8" width="1.4" height="1.4" fill="#b0bc48"/>
<rect x="171.2" y="458.3" width="1.4" height="1.4" fill="#b0bc48"/>
<rect x="359.7" y="458.0" width="1.4" height="1.4" fill="#a8aa70"/>
<rect x="67.2" y="459.2" width="1.4" height="1.4" fill="#a8aa70"/>
<rect x="53.8" y="458.5" width="1.4" height="1.4" fill="#b0bc48"/>
<rect x="195.8" y="458.3" width="1.4" height="1.4" fill="#8c9a30"/>
<rect x="175.4" y="458.6" width="1.4" height="1.4" fill="#8c9a30"/>
<rect x="156.9" y="459.1" width="1.4" height="1.4" fill="#8c9a30"/>
<rect x="435.5" y="458.7" width="1.4" height="1.4" fill="#b0bc48"/>
<rect x="172.4" y="457.6" width="1.4" height="1.4" fill="#8c9a30"/>
<rect x="117.5" y="458.5" width="1.4" height="1.4" fill="#a8aa70"/>
<rect x="456.4" y="459.0" width="1.4" height="1.4" fill="#a8aa70"/>
<rect x="158.2" y="458.3" width="1.4" height="1.4" fill="#b0bc48"/>
<rect x="390.4" y="459.0" width="1.4" height="1.4" fill="#a8aa70"/>
<rect x="61.8" y="459.0" width="1.4" height="1.4" fill="#a8aa70"/>
<rect x="166.5" y="459.1" width="1.4" height="1.4" fill="#8c9a30"/>
<rect x="209.0" y="458.0" width="1.4" height="1.4" fill="#8c9a30"/>
<rect x="331.7" y="458.8" width="1.4" height="1.4" fill="#b0bc48"/>
<rect x="454.4" y="459.3" width="1.4" height="1.4" fill="#a8aa70"/>
<rect x="359.9" y="459.4" width="1.4" height="1.4" fill="#a8aa70"/>
<rect x="394.7" y="459.8" width="1.4" height="1.4" fill="#a8aa70"/>
<rect x="236.7" y="458.4" width="1.4" height="1.4" fill="#9aaa34"/>
<rect x="490.9" y="458.3" width="1.4" height="1.4" fill="#b0bc48"/>
<rect x="96.8" y="457.9" width="1.4" height="1.4" fill="#a8aa70"/>
<rect x="123.6" y="458.5" width="1.4" height="1.4" fill="#a8aa70"/>
<rect x="182.7" y="459.3" width="1.4" height="1.4" fill="#a8aa70"/>
<rect x="388.1" y="459.2" width="1.4" height="1.4" fill="#b0bc48"/>
<rect x="453.8" y="458.5" width="1.4" height="1.4" fill="#b0bc48"/>
<rect x="113.5" y="458.4" width="1.4" height="1.4" fill="#b0bc48"/>
<rect x="330.9" y="458.9" width="1.4" height="1.4" fill="#8c9a30"/>
<rect x="76.3" y="458.9" width="1.4" height="1.4" fill="#b0bc48"/>
<rect x="327.2" y="457.7" width="1.4" height="1.4" fill="#9aaa34"/>
<rect x="35.9" y="458.5" width="1.4" height="1.4" fill="#8c9a30"/>
<rect x="251.4" y="458.7" width="1.4" height="1.4" fill="#b0bc48"/>
<rect x="179.2" y="458.5" width="1.4" height="1.4" fill="#8c9a30"/>
<rect x="126.1" y="458.5" width="1.4" height="1.4" fill="#9aaa34"/>
<rect x="176.0" y="458.4" width="1.4" height="1.4" fill="#b0bc48"/>
<rect x="66.8" y="458.4" width="1.4" height="1.4" fill="#b0bc48"/>
<rect x="39.5" y="458.7" width="1.4" height="1.4" fill="#8c9a30"/>
<rect x="243.4" y="458.2" width="1.4" height="1.4" fill="#9aaa34"/>
<rect x="38.7" y="459.4" width="1.4" height="1.4" fill="#b0bc48"/>
<rect x="237.7" y="459.1" width="1.4" height="1.4" fill="#b0bc48"/>
<rect x="362.9" y="459.4" width="1.4" height="1.4" fill="#b0bc48"/>
<rect x="180.3" y="458.7" width="1.4" height="1.4" fill="#b0bc48"/>
<rect x="145.9" y="458.4" width="1.4" height="1.4" fill="#9aaa34"/>
<rect x="390.9" y="458.4" width="1.4" height="1.4" fill="#b0bc48"/>
<rect x="129.5" y="458.4" width="1.4" height="1.4" fill="#a8aa70"/>
<rect x="297.6" y="458.9" width="1.4" height="1.4" fill="#8c9a30"/>
<rect x="44.7" y="458.0" width="1.4" height="1.4" fill="#9aaa34"/>
<rect x="429.7" y="458.0" width="1.4" height="1.4" fill="#8c9a30"/>
<rect x="70.5" y="458.6" width="1.4" height="1.4" fill="#b0bc48"/>
<rect x="309.4" y="458.7" width="1.4" height="1.4" fill="#9aaa34"/>
<rect x="145.2" y="459.4" width="1.4" height="1.4" fill="#a8aa70"/>
<rect x="298.8" y="457.8" width="1.4" height="1.4" fill="#a8aa70"/>
<rect x="262.7" y="457.9" width="1.4" height="1.4" fill="#a8aa70"/>
<rect x="297.0" y="458.7" width="1.4" height="1.4" fill="#9aaa34"/>
<rect x="311.1" y="458.6" width="1.4" height="1.4" fill="#b0bc48"/>
<rect x="345.3" y="458.3" width="1.4" height="1.4" fill="#a8aa70"/>
<rect x="206.0" y="458.7" width="1.4" height="1.4" fill="#b0bc48"/>
<rect x="132.6" y="458.8" width="1.4" height="1.4" fill="#8c9a30"/>
<rect x="92.1" y="458.6" width="1.4" height="1.4" fill="#8c9a30"/>
<rect x="67.8" y="458.7" width="1.4" height="1.4" fill="#b0bc48"/>
<rect x="272.1" y="459.0" width="1.4" height="1.4" fill="#a8aa70"/>
<rect x="136.6" y="458.7" width="1.4" height="1.4" fill="#a8aa70"/>
<rect x="160.7" y="458.8" width="1.4" height="1.4" fill="#9aaa34"/>
<rect x="113.4" y="458.5" width="1.4" height="1.4" fill="#b0bc48"/>
<rect x="185.2" y="458.5" width="1.4" height="1.4" fill="#a8aa70"/>
<rect x="50.1" y="459.2" width="1.4" height="1.4" fill="#9aaa34"/>
<rect x="415.8" y="458.5" width="1.4" height="1.4" fill="#a8aa70"/>
<rect x="232.3" y="458.9" width="1.4" height="1.4" fill="#b0bc48"/>
<rect x="379.3" y="459.6" width="1.4" height="1.4" fill="#8c9a30"/>
<rect x="128.6" y="458.8" width="1.4" height="1.4" fill="#8c9a30"/>
<rect x="179.8" y="459.2" width="1.4" height="1.4" fill="#b0bc48"/>
<rect x="354.0" y="458.0" width="1.4" height="1.4" fill="#8c9a30"/>
<rect x="420.3" y="456.9" width="1.4" height="1.4" fill="#b0bc48"/>
<rect x="437.9" y="458.2" width="1.4" height="1.4" fill="#b0bc48"/>
<rect x="273.6" y="458.4" width="1.4" height="1.4" fill="#9aaa34"/>
<rect x="215.6" y="458.5" width="1.4" height="1.4" fill="#b0bc48"/>
<rect x="98.4" y="457.9" width="1.4" height="1.4" fill="#9aaa34"/>
<rect x="389.0" y="458.1" width="1.4" height="1.4" fill="#a8aa70"/>
<rect x="349.4" y="458.8" width="1.4" height="1.4" fill="#9aaa34"/>
<rect x="226.5" y="459.3" width="1.4" height="1.4" fill="#b0bc48"/>
<rect x="187.6" y="459.0" width="1.4" height="1.4" fill="#8c9a30"/>
<rect x="41.7" y="459.5" width="1.4" height="1.4" fill="#a8aa70"/>
<rect x="254.6" y="459.2" width="1.4" height="1.4" fill="#9aaa34"/>
<rect x="320.4" y="458.4" width="1.4" height="1.4" fill="#b0bc48"/>
<rect x="42.2" y="458.7" width="1.4" height="1.4" fill="#b0bc48"/>
<rect x="115.5" y="458.3" width="1.4" height="1.4" fill="#a8aa70"/>
<rect x="68.7" y="458.0" width="1.4" height="1.4" fill="#a8aa70"/>
<rect x="305.6" y="459.6" width="1.4" height="1.4" fill="#a8aa70"/>
<rect x="84.1" y="458.6" width="1.4" height="1.4" fill="#9aaa34"/>
<rect x="121.3" y="459.2" width="1.4" height="1.4" fill="#b0bc48"/>
<rect x="261.1" y="459.2" width="1.4" height="1.4" fill="#b0bc48"/>
<rect x="504.1" y="459.0" width="1.4" height="1.4" fill="#9aaa34"/>
<rect x="441.3" y="458.0" width="1.4" height="1.4" fill="#9aaa34"/>
<rect x="69.3" y="458.9" width="1.4" height="1.4" fill="#b0bc48"/>
<rect x="188.1" y="459.1" width="1.4" height="1.4" fill="#8c9a30"/>
<rect x="343.9" y="457.9" width="1.4" height="1.4" fill="#8c9a30"/>
<rect x="326.8" y="458.6" width="1.4" height="1.4" fill="#9aaa34"/>
<rect x="109.3" y="458.2" width="1.4" height="1.4" fill="#9aaa34"/>
<rect x="250.8" y="457.9" width="1.4" height="1.4" fill="#8c9a30"/>
<rect x="452.2" y="458.6" width="1.4" height="1.4" fill="#b0bc48"/>
<rect x="312.6" y="459.1" width="1.4" height="1.4" fill="#9aaa34"/>
<rect x="191.0" y="459.4" width="1.4" height="1.4" fill="#a8aa70"/>
<rect x="206.4" y="458.8" width="1.4" height="1.4" fill="#8c9a30"/>
<rect x="331.9" y="458.1" width="1.4" height="1.4" fill="#b0bc48"/>
<rect x="174.1" y="458.9" width="1.4" height="1.4" fill="#8c9a30"/>
<rect x="226.9" y="459.1" width="1.4" height="1.4" fill="#a8aa70"/>
<rect x="209.0" y="458.5" width="1.4" height="1.4" fill="#b0bc48"/>
<rect x="472.5" y="459.3" width="1.4" height="1.4" fill="#a8aa70"/>
<rect x="408.1" y="458.7" width="1.4" height="1.4" fill="#b0bc48"/>
<rect x="287.9" y="458.6" width="1.4" height="1.4" fill="#9aaa34"/>
<rect x="229.8" y="459.2" width="1.4" height="1.4" fill="#9aaa34"/>
<rect x="37.5" y="458.1" width="1.4" height="1.4" fill="#b0bc48"/>
<rect x="474.8" y="458.7" width="1.4" height="1.4" fill="#9aaa34"/>
<rect x="199.2" y="459.5" width="1.4" height="1.4" fill="#9aaa34"/>
<rect x="483.0" y="458.7" width="1.4" height="1.4" fill="#b0bc48"/>
<rect x="373.5" y="458.0" width="1.4" height="1.4" fill="#9aaa34"/>
<rect x="78.6" y="458.2" width="1.4" height="1.4" fill="#b0bc48"/>
<rect x="206.0" y="458.2" width="1.4" height="1.4" fill="#b0bc48"/>
<rect x="63.5" y="459.4" width="1.4" height="1.4" fill="#9aaa34"/>
<rect x="241.2" y="458.3" width="1.4" height="1.4" fill="#9aaa34"/>
<rect x="144.8" y="458.2" width="1.4" height="1.4" fill="#a8aa70"/>
<rect x="253.4" y="457.4" width="1.4" height="1.4" fill="#9aaa34"/>
<rect x="124.3" y="458.7" width="1.4" height="1.4" fill="#8c9a30"/>
<rect x="232.1" y="458.8" width="1.4" height="1.4" fill="#b0bc48"/>
<rect x="220.6" y="458.5" width="1.4" height="1.4" fill="#9aaa34"/>
<rect x="402.8" y="458.9" width="1.4" height="1.4" fill="#9aaa34"/>
<rect x="251.5" y="459.3" width="1.4" height="1.4" fill="#9aaa34"/>
<rect x="115.2" y="459.5" width="1.4" height="1.4" fill="#a8aa70"/>
<rect x="138.9" y="458.0" width="1.4" height="1.4" fill="#a8aa70"/>
<rect x="292.9" y="459.3" width="1.4" height="1.4" fill="#9aaa34"/>
<rect x="439.6" y="458.0" width="1.4" height="1.4" fill="#9aaa34"/>
<rect x="215.5" y="459.0" width="1.4" height="1.4" fill="#a8aa70"/>
<rect x="271.5" y="458.0" width="1.4" height="1.4" fill="#a8aa70"/>
<rect x="221.8" y="460.1" width="1.4" height="1.4" fill="#b0bc48"/>
<rect x="81.2" y="458.4" width="1.4" height="1.4" fill="#b0bc48"/>
<rect x="218.0" y="457.4" width="1.4" height="1.4" fill="#b0bc48"/>
<rect x="232.0" y="458.2" width="1.4" height="1.4" fill="#a8aa70"/>
<rect x="510.5" y="469.5" width="1.3" height="1.3" fill="#8a8a60"/>
<rect x="289.3" y="463.3" width="1.3" height="1.3" fill="#8a9432"/>
<rect x="390.5" y="469.8" width="1.3" height="1.3" fill="#9ca040"/>
<rect x="332.0" y="467.8" width="1.3" height="1.3" fill="#7e8a34"/>
<rect x="221.1" y="468.7" width="1.3" height="1.3" fill="#7e8a34"/>
<rect x="148.5" y="465.6" width="1.3" height="1.3" fill="#9ca040"/>
<rect x="97.2" y="465.1" width="1.3" height="1.3" fill="#9ca040"/>
<rect x="395.6" y="461.2" width="1.3" height="1.3" fill="#9ca040"/>
<rect x="221.7" y="461.8" width="1.3" height="1.3" fill="#9ca040"/>
<rect x="184.1" y="468.6" width="1.3" height="1.3" fill="#8a9432"/>
<rect x="176.9" y="468.4" width="1.3" height="1.3" fill="#7e8a34"/>
<rect x="492.5" y="462.1" width="1.3" height="1.3" fill="#7e8a34"/>
<rect x="353.7" y="463.5" width="1.3" height="1.3" fill="#9ca040"/>
<rect x="194.6" y="463.0" width="1.3" height="1.3" fill="#7e8a34"/>
<rect x="286.3" y="467.7" width="1.3" height="1.3" fill="#7e8a34"/>
<rect x="330.9" y="468.9" width="1.3" height="1.3" fill="#8a9432"/>
<rect x="423.7" y="471.4" width="1.3" height="1.3" fill="#8a9432"/>
<rect x="136.3" y="467.6" width="1.3" height="1.3" fill="#7e8a34"/>
<rect x="66.0" y="470.7" width="1.3" height="1.3" fill="#8a9432"/>
<rect x="250.7" y="461.7" width="1.3" height="1.3" fill="#8a9432"/>
<rect x="263.1" y="470.5" width="1.3" height="1.3" fill="#9ca040"/>
<rect x="495.6" y="469.9" width="1.3" height="1.3" fill="#7e8a34"/>
<rect x="75.1" y="465.4" width="1.3" height="1.3" fill="#8a9432"/>
<rect x="104.6" y="467.8" width="1.3" height="1.3" fill="#9ca040"/>
<rect x="44.3" y="465.0" width="1.3" height="1.3" fill="#9ca040"/>
<rect x="523.7" y="465.8" width="1.3" height="1.3" fill="#8a9432"/>
<rect x="91.1" y="468.2" width="1.3" height="1.3" fill="#8a9432"/>
<rect x="251.2" y="469.4" width="1.3" height="1.3" fill="#8a9432"/>
<rect x="34.1" y="462.9" width="1.3" height="1.3" fill="#8a8a60"/>
<rect x="209.9" y="471.2" width="1.3" height="1.3" fill="#7e8a34"/>
<rect x="171.4" y="465.7" width="1.3" height="1.3" fill="#9ca040"/>
<rect x="307.4" y="464.4" width="1.3" height="1.3" fill="#8a8a60"/>
<rect x="126.0" y="468.7" width="1.3" height="1.3" fill="#8a8a60"/>
<rect x="149.7" y="469.4" width="1.3" height="1.3" fill="#9ca040"/>
<rect x="346.4" y="465.2" width="1.3" height="1.3" fill="#8a9432"/>
<rect x="130.6" y="468.1" width="1.3" height="1.3" fill="#9ca040"/>
<rect x="421.9" y="471.0" width="1.3" height="1.3" fill="#7e8a34"/>
<rect x="317.3" y="463.2" width="1.3" height="1.3" fill="#7e8a34"/>
<rect x="265.6" y="465.4" width="1.3" height="1.3" fill="#7e8a34"/>
<rect x="228.4" y="461.6" width="1.3" height="1.3" fill="#8a8a60"/>
<rect x="385.7" y="460.7" width="1.3" height="1.3" fill="#7e8a34"/>
<rect x="233.0" y="465.0" width="1.3" height="1.3" fill="#8a9432"/>
<rect x="41.0" y="467.3" width="1.3" height="1.3" fill="#8a9432"/>
<rect x="256.8" y="470.7" width="1.3" height="1.3" fill="#7e8a34"/>
<rect x="134.9" y="464.1" width="1.3" height="1.3" fill="#8a8a60"/>
<rect x="226.6" y="461.5" width="1.3" height="1.3" fill="#7e8a34"/>
<rect x="526.7" y="469.4" width="1.3" height="1.3" fill="#9ca040"/>
<rect x="388.8" y="467.9" width="1.3" height="1.3" fill="#8a9432"/>
<rect x="177.5" y="462.6" width="1.3" height="1.3" fill="#8a8a60"/>
<rect x="531.0" y="469.0" width="1.3" height="1.3" fill="#8a9432"/>
<rect x="131.4" y="464.5" width="1.3" height="1.3" fill="#8a9432"/>
<rect x="188.3" y="460.9" width="1.3" height="1.3" fill="#8a8a60"/>
<rect x="290.2" y="469.8" width="1.3" height="1.3" fill="#8a8a60"/>
<rect x="547.2" y="463.2" width="1.3" height="1.3" fill="#8a8a60"/>
<rect x="319.0" y="470.9" width="1.3" height="1.3" fill="#8a8a60"/>
<rect x="420.4" y="471.2" width="1.3" height="1.3" fill="#7e8a34"/>
<rect x="355.2" y="471.1" width="1.3" height="1.3" fill="#9ca040"/>
<rect x="41.7" y="470.9" width="1.3" height="1.3" fill="#9ca040"/>
<rect x="394.8" y="463.4" width="1.3" height="1.3" fill="#7e8a34"/>
<rect x="221.0" y="465.1" width="1.3" height="1.3" fill="#8a8a60"/>
<rect x="259.3" y="468.6" width="1.3" height="1.3" fill="#8a8a60"/>
<rect x="156.3" y="462.2" width="1.3" height="1.3" fill="#7e8a34"/>
<rect x="279.6" y="461.5" width="1.3" height="1.3" fill="#7e8a34"/>
<rect x="325.1" y="463.8" width="1.3" height="1.3" fill="#9ca040"/>
<rect x="182.9" y="464.0" width="1.3" height="1.3" fill="#9ca040"/>
<rect x="285.5" y="463.4" width="1.3" height="1.3" fill="#8a8a60"/>
<rect x="244.2" y="462.3" width="1.3" height="1.3" fill="#8a8a60"/>
<rect x="63.3" y="464.5" width="1.3" height="1.3" fill="#8a9432"/>
<rect x="180.8" y="470.5" width="1.3" height="1.3" fill="#8a9432"/>
<rect x="156.9" y="462.8" width="1.3" height="1.3" fill="#9ca040"/>
<rect x="136.1" y="470.3" width="1.3" height="1.3" fill="#9ca040"/>
<rect x="290.9" y="468.3" width="1.3" height="1.3" fill="#9ca040"/>
<rect x="395.8" y="468.2" width="1.3" height="1.3" fill="#7e8a34"/>
<rect x="454.4" y="462.6" width="1.3" height="1.3" fill="#9ca040"/>
<rect x="408.8" y="462.7" width="1.3" height="1.3" fill="#9ca040"/>
<rect x="281.0" y="464.1" width="1.3" height="1.3" fill="#8a8a60"/>
<rect x="67.6" y="470.2" width="1.3" height="1.3" fill="#9ca040"/>
<rect x="131.4" y="463.2" width="1.3" height="1.3" fill="#7e8a34"/>
<rect x="262.7" y="467.1" width="1.3" height="1.3" fill="#8a9432"/>
<rect x="369.3" y="467.3" width="1.3" height="1.3" fill="#9ca040"/>
<rect x="54.3" y="466.0" width="1.3" height="1.3" fill="#7e8a34"/>
<rect x="154.9" y="470.1" width="1.3" height="1.3" fill="#7e8a34"/>
<rect x="304.6" y="468.5" width="1.3" height="1.3" fill="#7e8a34"/>
<rect x="47.9" y="463.1" width="1.3" height="1.3" fill="#8a9432"/>
<rect x="207.3" y="461.6" width="1.3" height="1.3" fill="#9ca040"/>
<rect x="313.5" y="468.1" width="1.3" height="1.3" fill="#8a8a60"/>
<rect x="440.2" y="468.4" width="1.3" height="1.3" fill="#8a8a60"/>
<rect x="68.3" y="463.8" width="1.3" height="1.3" fill="#8a9432"/>
<rect x="282.1" y="468.7" width="1.3" height="1.3" fill="#7e8a34"/>
<rect x="261.6" y="467.7" width="1.3" height="1.3" fill="#9ca040"/>
<rect x="188.9" y="462.2" width="1.3" height="1.3" fill="#8a8a60"/>
<rect x="146.9" y="462.9" width="1.3" height="1.3" fill="#8a9432"/>
<rect x="97.8" y="464.0" width="1.3" height="1.3" fill="#9ca040"/>
<rect x="341.5" y="471.3" width="1.3" height="1.3" fill="#8a9432"/>
<rect x="133.2" y="470.8" width="1.3" height="1.3" fill="#7e8a34"/>
<rect x="130.2" y="462.9" width="1.3" height="1.3" fill="#9ca040"/>
<rect x="174.5" y="470.9" width="1.3" height="1.3" fill="#8a9432"/>
<rect x="273.5" y="470.2" width="1.3" height="1.3" fill="#8a8a60"/>
<rect x="135.5" y="461.7" width="1.3" height="1.3" fill="#8a9432"/>
<rect x="34.9" y="464.8" width="1.3" height="1.3" fill="#7e8a34"/>
<rect x="445.7" y="462.6" width="1.3" height="1.3" fill="#7e8a34"/>
<rect x="58.1" y="470.0" width="1.3" height="1.3" fill="#8a9432"/>
<rect x="333.2" y="467.3" width="1.3" height="1.3" fill="#8a8a60"/>
<rect x="142.9" y="463.4" width="1.3" height="1.3" fill="#9ca040"/>
<rect x="210.0" y="462.4" width="1.3" height="1.3" fill="#8a8a60"/>
<rect x="134.3" y="470.4" width="1.3" height="1.3" fill="#9ca040"/>
<rect x="269.2" y="466.7" width="1.3" height="1.3" fill="#8a8a60"/>
<rect x="262.2" y="471.1" width="1.3" height="1.3" fill="#9ca040"/>
<rect x="360.3" y="463.5" width="1.3" height="1.3" fill="#8a8a60"/>
<rect x="73.1" y="468.9" width="1.3" height="1.3" fill="#8a8a60"/>
<rect x="262.2" y="469.0" width="1.3" height="1.3" fill="#8a9432"/>
<rect x="213.1" y="471.2" width="1.3" height="1.3" fill="#8a8a60"/>
<rect x="214.6" y="470.4" width="1.3" height="1.3" fill="#8a8a60"/>
<rect x="149.7" y="460.7" width="1.3" height="1.3" fill="#7e8a34"/>
<rect x="295.3" y="469.1" width="1.3" height="1.3" fill="#8a8a60"/>
<rect x="68.7" y="463.7" width="1.3" height="1.3" fill="#9ca040"/>
<rect x="165.8" y="465.4" width="1.3" height="1.3" fill="#7e8a34"/>
<rect x="443.6" y="463.6" width="1.3" height="1.3" fill="#8a9432"/>
<rect x="177.8" y="465.7" width="1.3" height="1.3" fill="#8a8a60"/>
<rect x="205.4" y="462.9" width="1.3" height="1.3" fill="#8a8a60"/>
<rect x="382.0" y="462.7" width="1.3" height="1.3" fill="#8a8a60"/>
<rect x="388.7" y="470.9" width="1.3" height="1.3" fill="#8a8a60"/>
<rect x="218.9" y="470.6" width="1.3" height="1.3" fill="#9ca040"/>
<rect x="320.4" y="467.5" width="1.3" height="1.3" fill="#7e8a34"/>
<rect x="233.3" y="467.5" width="1.3" height="1.3" fill="#8a9432"/>
<rect x="317.0" y="467.0" width="1.3" height="1.3" fill="#9ca040"/>
<rect x="354.7" y="471.1" width="1.3" height="1.3" fill="#8a9432"/>
<rect x="368.2" y="469.3" width="1.3" height="1.3" fill="#8a9432"/>
<rect x="290.5" y="471.1" width="1.3" height="1.3" fill="#9ca040"/>
<rect x="485.0" y="463.8" width="1.3" height="1.3" fill="#9ca040"/>
<rect x="210.7" y="469.0" width="1.3" height="1.3" fill="#8a8a60"/>
<rect x="401.9" y="461.5" width="1.3" height="1.3" fill="#9ca040"/>
<rect x="151.0" y="464.7" width="1.3" height="1.3" fill="#7e8a34"/>
<rect x="126.0" y="465.0" width="1.3" height="1.3" fill="#7e8a34"/>
<rect x="282.1" y="467.6" width="1.3" height="1.3" fill="#9ca040"/>
<rect x="225.0" y="463.7" width="1.3" height="1.3" fill="#8a9432"/>
<rect x="527.8" y="467.9" width="1.3" height="1.3" fill="#9ca040"/>
<rect x="313.7" y="462.9" width="1.3" height="1.3" fill="#8a8a60"/>
<rect x="44.7" y="469.5" width="1.3" height="1.3" fill="#9ca040"/>
<rect x="56.7" y="464.1" width="1.3" height="1.3" fill="#8a9432"/>
<rect x="279.2" y="465.4" width="1.3" height="1.3" fill="#9ca040"/>
<rect x="164.8" y="461.5" width="1.3" height="1.3" fill="#9ca040"/>
<rect x="170.7" y="468.1" width="1.3" height="1.3" fill="#7e8a34"/>
<rect x="174.8" y="462.3" width="1.3" height="1.3" fill="#8a8a60"/>
<rect x="389.4" y="465.5" width="1.3" height="1.3" fill="#8a8a60"/>
<rect x="250.7" y="466.0" width="1.3" height="1.3" fill="#8a8a60"/>
<rect x="266.9" y="460.7" width="1.3" height="1.3" fill="#7e8a34"/>
<rect x="183.4" y="467.2" width="1.3" height="1.3" fill="#8a9432"/>
<rect x="359.4" y="469.3" width="1.3" height="1.3" fill="#8a8a60"/>
<rect x="272.4" y="465.4" width="1.3" height="1.3" fill="#7e8a34"/>
<rect x="72.8" y="461.0" width="1.3" height="1.3" fill="#8a8a60"/>
<rect x="304.0" y="462.1" width="1.3" height="1.3" fill="#9ca040"/>
<rect x="553.7" y="460.7" width="1.3" height="1.3" fill="#8a9432"/>
<rect x="320.7" y="463.8" width="1.3" height="1.3" fill="#8a9432"/>
<rect x="387.7" y="466.6" width="1.3" height="1.3" fill="#9ca040"/>
<rect x="356.4" y="463.6" width="1.3" height="1.3" fill="#7e8a34"/>
<rect x="350.9" y="468.0" width="1.3" height="1.3" fill="#7e8a34"/>
<rect x="86.9" y="468.6" width="1.3" height="1.3" fill="#7e8a34"/>
<rect x="431.9" y="471.0" width="1.3" height="1.3" fill="#7e8a34"/>
<rect x="423.3" y="470.2" width="1.3" height="1.3" fill="#8a9432"/>
<rect x="524.8" y="465.3" width="1.3" height="1.3" fill="#8a8a60"/>
<rect x="237.3" y="466.9" width="1.3" height="1.3" fill="#8a9432"/>
<rect x="159.7" y="461.5" width="1.3" height="1.3" fill="#8a9432"/>
<rect x="68.3" y="468.8" width="1.3" height="1.3" fill="#9ca040"/>
<rect x="96.8" y="464.4" width="1.3" height="1.3" fill="#8a8a60"/>
<rect x="37.5" y="465.1" width="1.3" height="1.3" fill="#8a9432"/>
<rect x="312.5" y="471.1" width="1.3" height="1.3" fill="#9ca040"/>
<rect x="326.5" y="461.3" width="1.3" height="1.3" fill="#7e8a34"/>
<rect x="140.8" y="464.3" width="1.3" height="1.3" fill="#7e8a34"/>
<rect x="269.2" y="470.9" width="1.3" height="1.3" fill="#8a9432"/>
<rect x="102.0" y="469.0" width="1.3" height="1.3" fill="#8a8a60"/>
<rect x="60.9" y="469.8" width="1.3" height="1.3" fill="#7e8a34"/>
<rect x="160.6" y="469.8" width="1.3" height="1.3" fill="#8a9432"/>
<rect x="106.6" y="460.8" width="1.3" height="1.3" fill="#8a9432"/>
<rect x="344.9" y="469.5" width="1.3" height="1.3" fill="#8a8a60"/>
<rect x="92.6" y="464.5" width="1.3" height="1.3" fill="#7e8a34"/>
<rect x="70.8" y="462.9" width="1.3" height="1.3" fill="#8a8a60"/>
<rect x="112.3" y="465.9" width="1.3" height="1.3" fill="#8a8a60"/>
<rect x="36.7" y="460.8" width="1.3" height="1.3" fill="#8a9432"/>
<rect x="135.3" y="471.3" width="1.3" height="1.3" fill="#8a8a60"/>
<rect x="185.8" y="464.2" width="1.3" height="1.3" fill="#7e8a34"/>
<rect x="235.0" y="467.4" width="1.3" height="1.3" fill="#8a9432"/>
<rect x="510.6" y="468.3" width="1.3" height="1.3" fill="#9ca040"/>
<rect x="162.1" y="470.3" width="1.3" height="1.3" fill="#7e8a34"/>
<rect x="213.2" y="465.4" width="1.3" height="1.3" fill="#8a9432"/>
<rect x="223.9" y="461.1" width="1.3" height="1.3" fill="#9ca040"/>
<rect x="109.2" y="465.3" width="1.3" height="1.3" fill="#7e8a34"/>
<rect x="261.8" y="469.1" width="1.3" height="1.3" fill="#8a8a60"/>
<rect x="134.3" y="462.2" width="1.3" height="1.3" fill="#8a9432"/>
<rect x="171.6" y="463.9" width="1.3" height="1.3" fill="#7e8a34"/>
<rect x="318.4" y="467.3" width="1.3" height="1.3" fill="#9ca040"/>
<rect x="418.8" y="464.0" width="1.3" height="1.3" fill="#9ca040"/>
<rect x="370.5" y="465.9" width="1.3" height="1.3" fill="#8a9432"/>
<rect x="68.0" y="468.9" width="1.3" height="1.3" fill="#8a8a60"/>
<rect x="127.2" y="466.3" width="1.3" height="1.3" fill="#8a8a60"/>
<rect x="174.5" y="468.8" width="1.3" height="1.3" fill="#8a8a60"/>
<rect x="316.4" y="461.6" width="1.3" height="1.3" fill="#7e8a34"/>
<rect x="99.7" y="464.0" width="1.3" height="1.3" fill="#8a8a60"/>
<rect x="251.1" y="463.5" width="1.3" height="1.3" fill="#9ca040"/>
<rect x="541.9" y="470.3" width="1.3" height="1.3" fill="#8a9432"/>
<rect x="106.8" y="468.6" width="1.3" height="1.3" fill="#9ca040"/>
<rect x="229.1" y="464.5" width="1.3" height="1.3" fill="#8a9432"/>
<rect x="283.7" y="465.1" width="1.3" height="1.3" fill="#8a9432"/>
<rect x="117.9" y="470.4" width="1.3" height="1.3" fill="#9ca040"/>
<rect x="374.8" y="466.8" width="1.3" height="1.3" fill="#7e8a34"/>
<rect x="279.7" y="466.3" width="1.3" height="1.3" fill="#9ca040"/>
<rect x="116.1" y="465.6" width="1.3" height="1.3" fill="#9ca040"/>
<rect x="186.0" y="466.0" width="1.3" height="1.3" fill="#9ca040"/>
<rect x="240.9" y="466.2" width="1.3" height="1.3" fill="#8a8a60"/>
<rect x="76.1" y="463.8" width="1.3" height="1.3" fill="#8a9432"/>
<rect x="266.9" y="470.3" width="1.3" height="1.3" fill="#7e8a34"/>
<rect x="188.7" y="461.8" width="1.3" height="1.3" fill="#7e8a34"/>
<rect x="416.2" y="469.6" width="1.3" height="1.3" fill="#7e8a34"/>
<rect x="103.2" y="461.8" width="1.3" height="1.3" fill="#8a9432"/>
<rect x="331.1" y="467.8" width="1.3" height="1.3" fill="#7e8a34"/>
<rect x="351.4" y="461.3" width="1.3" height="1.3" fill="#9ca040"/>
<rect x="403.9" y="470.6" width="1.3" height="1.3" fill="#8a9432"/>
<rect x="293.5" y="466.9" width="1.3" height="1.3" fill="#8a9432"/>
<rect x="253.8" y="466.5" width="1.3" height="1.3" fill="#7e8a34"/>
<rect x="201.9" y="461.7" width="1.3" height="1.3" fill="#8a9432"/>
<rect x="462.4" y="462.3" width="1.3" height="1.3" fill="#9ca040"/>
<rect x="164.4" y="468.0" width="1.3" height="1.3" fill="#7e8a34"/>
<rect x="346.1" y="468.8" width="1.3" height="1.3" fill="#8a8a60"/>
<rect x="151.3" y="465.9" width="1.3" height="1.3" fill="#7e8a34"/>
<rect x="122.8" y="466.1" width="1.3" height="1.3" fill="#8a8a60"/>
<rect x="225.1" y="469.5" width="1.3" height="1.3" fill="#7e8a34"/>
<rect x="101.3" y="465.0" width="1.3" height="1.3" fill="#8a8a60"/>
<rect x="247.3" y="467.4" width="1.3" height="1.3" fill="#8a8a60"/>
<rect x="444.2" y="468.7" width="1.3" height="1.3" fill="#8a8a60"/>
<rect x="218.5" y="462.8" width="1.3" height="1.3" fill="#7e8a34"/>
<rect x="371.1" y="468.0" width="1.3" height="1.3" fill="#8a9432"/>
<rect x="364.3" y="463.0" width="1.3" height="1.3" fill="#8a8a60"/>
<rect x="152.3" y="467.6" width="1.3" height="1.3" fill="#8a8a60"/>
<rect x="194.1" y="469.1" width="1.3" height="1.3" fill="#9ca040"/>
<rect x="294.4" y="466.9" width="1.3" height="1.3" fill="#8a9432"/>
<rect x="41.7" y="465.0" width="1.3" height="1.3" fill="#9ca040"/>
<rect x="201.0" y="466.7" width="1.3" height="1.3" fill="#9ca040"/>
<rect x="335.3" y="462.7" width="1.3" height="1.3" fill="#8a9432"/>
<rect x="126.3" y="466.0" width="1.3" height="1.3" fill="#7e8a34"/>
<rect x="249.3" y="460.7" width="1.3" height="1.3" fill="#9ca040"/>
<rect x="282.1" y="464.2" width="1.3" height="1.3" fill="#7e8a34"/>
<rect x="267.3" y="463.4" width="1.3" height="1.3" fill="#7e8a34"/>
<rect x="93.5" y="469.6" width="1.3" height="1.3" fill="#9ca040"/>
<rect x="88.1" y="466.9" width="1.3" height="1.3" fill="#8a8a60"/>
<rect x="321.3" y="461.9" width="1.3" height="1.3" fill="#8a9432"/>
<rect x="216.5" y="464.2" width="1.3" height="1.3" fill="#7e8a34"/>
<rect x="250.6" y="469.2" width="1.3" height="1.3" fill="#8a8a60"/>
<rect x="55.6" y="466.4" width="1.3" height="1.3" fill="#7e8a34"/>
<rect x="346.9" y="465.6" width="1.3" height="1.3" fill="#8a8a60"/>
<rect x="35.3" y="462.4" width="1.3" height="1.3" fill="#8a8a60"/>
<rect x="362.7" y="464.3" width="1.3" height="1.3" fill="#8a8a60"/>
<rect x="127.3" y="462.6" width="1.3" height="1.3" fill="#7e8a34"/>
<rect x="372.8" y="466.8" width="1.3" height="1.3" fill="#8a9432"/>
<rect x="100.7" y="468.8" width="1.3" height="1.3" fill="#9ca040"/>
<rect x="263.2" y="466.4" width="1.3" height="1.3" fill="#9ca040"/>
<rect x="114.6" y="465.3" width="1.3" height="1.3" fill="#8a9432"/>
<rect x="384.8" y="467.6" width="1.3" height="1.3" fill="#8a9432"/>
<rect x="200.0" y="468.0" width="1.3" height="1.3" fill="#7e8a34"/>
<rect x="64.7" y="464.7" width="1.3" height="1.3" fill="#9ca040"/>
<rect x="126.3" y="471.2" width="1.3" height="1.3" fill="#7e8a34"/>
<rect x="131.6" y="461.3" width="1.3" height="1.3" fill="#7e8a34"/>
<rect x="132.9" y="463.1" width="1.3" height="1.3" fill="#9ca040"/>
<rect x="56.9" y="470.4" width="1.3" height="1.3" fill="#8a9432"/>
<rect x="450.4" y="462.7" width="1.3" height="1.3" fill="#9ca040"/>
<rect x="456.2" y="468.1" width="1.3" height="1.3" fill="#8a8a60"/>
<rect x="73.4" y="468.0" width="1.3" height="1.3" fill="#8a9432"/>
<rect x="301.4" y="468.3" width="1.3" height="1.3" fill="#9ca040"/>
<rect x="74.2" y="466.9" width="1.3" height="1.3" fill="#8a8a60"/>
<rect x="162.6" y="467.7" width="1.3" height="1.3" fill="#7e8a34"/>
<rect x="195.1" y="468.3" width="1.3" height="1.3" fill="#9ca040"/>
<rect x="227.5" y="470.9" width="1.3" height="1.3" fill="#8a8a60"/>
<rect x="451.9" y="464.7" width="1.3" height="1.3" fill="#8a9432"/>
<rect x="189.5" y="470.2" width="1.3" height="1.3" fill="#8a9432"/>
<rect x="419.0" y="471.3" width="1.3" height="1.3" fill="#7e8a34"/>
<rect x="46.4" y="462.9" width="1.3" height="1.3" fill="#8a8a60"/>
<rect x="84.7" y="468.5" width="1.3" height="1.3" fill="#8a8a60"/>
<rect x="387.6" y="465.7" width="1.3" height="1.3" fill="#8a9432"/>
<rect x="315.7" y="461.8" width="1.3" height="1.3" fill="#8a8a60"/>
<rect x="103.4" y="465.1" width="1.3" height="1.3" fill="#9ca040"/>
<rect x="109.5" y="466.1" width="1.3" height="1.3" fill="#9ca040"/>
<rect x="206.1" y="467.3" width="1.3" height="1.3" fill="#9ca040"/>
<rect x="74.2" y="468.7" width="1.3" height="1.3" fill="#7e8a34"/>
<rect x="88.5" y="461.3" width="1.3" height="1.3" fill="#8a9432"/>
<rect x="457.2" y="465.4" width="1.3" height="1.3" fill="#8a9432"/>
<rect x="129.3" y="465.9" width="1.3" height="1.3" fill="#8a8a60"/>
<rect x="103.6" y="471.2" width="1.3" height="1.3" fill="#7e8a34"/>
<rect x="405.3" y="461.6" width="1.3" height="1.3" fill="#8a8a60"/>
<rect x="352.1" y="460.7" width="1.3" height="1.3" fill="#9ca040"/>
<rect x="376.6" y="461.4" width="1.3" height="1.3" fill="#8a9432"/>
<rect x="379.4" y="470.1" width="1.3" height="1.3" fill="#8a9432"/>
<rect x="87.5" y="460.9" width="1.3" height="1.3" fill="#8a8a60"/>
<rect x="100.9" y="461.6" width="1.3" height="1.3" fill="#9ca040"/>
<rect x="105.3" y="461.2" width="1.3" height="1.3" fill="#7e8a34"/>
<rect x="152.6" y="461.2" width="1.3" height="1.3" fill="#8a8a60"/>
<rect x="331.3" y="463.5" width="1.3" height="1.3" fill="#8a9432"/>
<rect x="56.6" y="463.5" width="1.3" height="1.3" fill="#8a8a60"/>
<rect x="58.7" y="464.0" width="1.3" height="1.3" fill="#7e8a34"/>
<rect x="226.7" y="470.7" width="1.3" height="1.3" fill="#8a8a60"/>
<rect x="276.4" y="466.5" width="1.3" height="1.3" fill="#8a9432"/>
<rect x="115.8" y="461.5" width="1.3" height="1.3" fill="#7e8a34"/>
<rect x="105.8" y="462.6" width="1.3" height="1.3" fill="#7e8a34"/>
<rect x="389.0" y="462.1" width="1.3" height="1.3" fill="#7e8a34"/>
<rect x="219.7" y="470.6" width="1.3" height="1.3" fill="#8a9432"/>
<rect x="61.4" y="466.2" width="1.3" height="1.3" fill="#8a9432"/>
<rect x="41.4" y="464.5" width="1.3" height="1.3" fill="#9ca040"/>
<rect x="224.5" y="462.5" width="1.3" height="1.3" fill="#8a8a60"/>
<rect x="39.6" y="467.6" width="1.3" height="1.3" fill="#8a8a60"/>
<rect x="199.8" y="462.0" width="1.3" height="1.3" fill="#9ca040"/>
<rect x="81.9" y="467.6" width="1.3" height="1.3" fill="#8a9432"/>
<rect x="212.0" y="469.3" width="1.3" height="1.3" fill="#9ca040"/>
<rect x="152.5" y="468.1" width="1.3" height="1.3" fill="#9ca040"/>
<rect x="211.7" y="464.8" width="1.3" height="1.3" fill="#9ca040"/>
<rect x="68.1" y="468.3" width="1.3" height="1.3" fill="#7e8a34"/>
<rect x="62.8" y="463.3" width="1.3" height="1.3" fill="#7e8a34"/>
<rect x="467.4" y="466.7" width="1.3" height="1.3" fill="#8a8a60"/>
<rect x="104.3" y="465.9" width="1.3" height="1.3" fill="#9ca040"/>
<rect x="64.9" y="462.6" width="1.3" height="1.3" fill="#8a9432"/>
<rect x="170.1" y="468.1" width="1.3" height="1.3" fill="#8a8a60"/>
<rect x="201.7" y="461.7" width="1.3" height="1.3" fill="#7e8a34"/>
<rect x="166.7" y="470.4" width="1.3" height="1.3" fill="#8a9432"/>
<rect x="287.0" y="464.0" width="1.3" height="1.3" fill="#7e8a34"/>
<rect x="34.4" y="470.7" width="1.3" height="1.3" fill="#8a8a60"/>
<rect x="269.3" y="464.4" width="1.3" height="1.3" fill="#8a9432"/>
<rect x="94.9" y="463.8" width="1.3" height="1.3" fill="#9ca040"/>
<rect x="99.9" y="462.4" width="1.3" height="1.3" fill="#9ca040"/>
<rect x="395.0" y="470.5" width="1.3" height="1.3" fill="#8a8a60"/>
<rect x="226.3" y="471.4" width="1.3" height="1.3" fill="#8a9432"/>
<rect x="343.0" y="469.6" width="1.3" height="1.3" fill="#8a9432"/>
<rect x="404.3" y="467.2" width="1.3" height="1.3" fill="#9ca040"/>
<rect x="176.4" y="471.2" width="1.3" height="1.3" fill="#8a9432"/>
<rect x="117.7" y="466.9" width="1.3" height="1.3" fill="#9ca040"/>
<rect x="194.6" y="466.8" width="1.3" height="1.3" fill="#8a8a60"/>
<rect x="49.3" y="462.0" width="1.3" height="1.3" fill="#8a9432"/>
<rect x="161.7" y="467.9" width="1.3" height="1.3" fill="#7e8a34"/>
<rect x="162.2" y="461.0" width="1.3" height="1.3" fill="#8a9432"/>
<rect x="60.7" y="461.6" width="1.3" height="1.3" fill="#8a9432"/>
<rect x="123.3" y="471.4" width="1.3" height="1.3" fill="#9ca040"/>
<rect x="58.1" y="468.8" width="1.3" height="1.3" fill="#7e8a34"/>
<rect x="84.4" y="470.8" width="1.3" height="1.3" fill="#8a8a60"/>
<rect x="85.9" y="466.7" width="1.3" height="1.3" fill="#8a9432"/>
<rect x="161.9" y="462.9" width="1.3" height="1.3" fill="#8a9432"/>
<rect x="319.6" y="468.8" width="1.3" height="1.3" fill="#8a8a60"/>
<rect x="151.1" y="466.2" width="1.3" height="1.3" fill="#9ca040"/>
<rect x="151.1" y="465.9" width="1.3" height="1.3" fill="#9ca040"/>
<rect x="252.5" y="470.1" width="1.3" height="1.3" fill="#8a8a60"/>
<rect x="143.3" y="470.0" width="1.3" height="1.3" fill="#8a9432"/>
<rect x="215.6" y="462.4" width="1.3" height="1.3" fill="#8a8a60"/>
<rect x="93.9" y="469.9" width="1.3" height="1.3" fill="#7e8a34"/>
<rect x="46.4" y="461.7" width="1.3" height="1.3" fill="#7e8a34"/>
<rect x="341.0" y="467.1" width="1.3" height="1.3" fill="#8a9432"/>
<rect x="365.8" y="461.8" width="1.3" height="1.3" fill="#8a8a60"/>
<rect x="499.2" y="466.1" width="1.3" height="1.3" fill="#7e8a34"/>
<rect x="200.2" y="466.6" width="1.3" height="1.3" fill="#8a8a60"/>
<rect x="185.8" y="462.1" width="1.3" height="1.3" fill="#9ca040"/>
<rect x="357.6" y="464.1" width="1.3" height="1.3" fill="#7e8a34"/>
<rect x="325.2" y="467.5" width="1.3" height="1.3" fill="#8a9432"/>
<rect x="143.2" y="467.3" width="1.3" height="1.3" fill="#8a8a60"/>
<rect x="98.0" y="462.5" width="1.3" height="1.3" fill="#8a8a60"/>
<rect x="412.1" y="465.9" width="1.3" height="1.3" fill="#8a8a60"/>
<rect x="90.7" y="470.6" width="1.3" height="1.3" fill="#8a9432"/>
<rect x="117.6" y="462.4" width="1.3" height="1.3" fill="#8a9432"/>
<rect x="45.6" y="470.4" width="1.3" height="1.3" fill="#7e8a34"/>
<rect x="344.1" y="470.9" width="1.3" height="1.3" fill="#9ca040"/>
<rect x="142.2" y="471.2" width="1.3" height="1.3" fill="#8a9432"/>
<rect x="82.5" y="467.1" width="1.3" height="1.3" fill="#8a9432"/>
<rect x="218.0" y="469.4" width="1.3" height="1.3" fill="#7e8a34"/>
<rect x="180.7" y="468.3" width="1.3" height="1.3" fill="#7e8a34"/>
<rect x="169.3" y="464.1" width="1.3" height="1.3" fill="#9ca040"/>
<rect x="122.3" y="471.1" width="1.3" height="1.3" fill="#8a9432"/>
<rect x="196.8" y="471.0" width="1.3" height="1.3" fill="#7e8a34"/>
<rect x="160.7" y="463.0" width="1.3" height="1.3" fill="#7e8a34"/>
<rect x="133.0" y="471.4" width="1.3" height="1.3" fill="#7e8a34"/>
<rect x="360.6" y="467.9" width="1.3" height="1.3" fill="#8a8a60"/>
<rect x="350.9" y="460.7" width="1.3" height="1.3" fill="#8a8a60"/>
<rect x="151.9" y="467.4" width="1.3" height="1.3" fill="#8a8a60"/>
<rect x="105.1" y="468.2" width="1.3" height="1.3" fill="#8a9432"/>
<rect x="323.9" y="470.1" width="1.3" height="1.3" fill="#8a8a60"/>
<rect x="197.7" y="461.3" width="1.3" height="1.3" fill="#8a9432"/>
<rect x="335.5" y="466.5" width="1.3" height="1.3" fill="#7e8a34"/>
<rect x="467.5" y="464.3" width="1.3" height="1.3" fill="#7e8a34"/>
<rect x="308.6" y="464.5" width="1.3" height="1.3" fill="#8a8a60"/>
<rect x="281.1" y="465.9" width="1.3" height="1.3" fill="#7e8a34"/>
<rect x="178.8" y="461.4" width="1.3" height="1.3" fill="#9ca040"/>
<rect x="357.3" y="463.1" width="1.3" height="1.3" fill="#9ca040"/>
<rect x="195.6" y="466.1" width="1.3" height="1.3" fill="#7e8a34"/>
<rect x="220.7" y="466.0" width="1.3" height="1.3" fill="#9ca040"/>
<rect x="359.9" y="470.5" width="1.3" height="1.3" fill="#8a9432"/>
<rect x="200.2" y="462.2" width="1.3" height="1.3" fill="#7e8a34"/>
<rect x="366.7" y="464.2" width="1.3" height="1.3" fill="#9ca040"/>
<rect x="81.3" y="463.8" width="1.3" height="1.3" fill="#8a8a60"/>
<rect x="285.8" y="463.4" width="1.3" height="1.3" fill="#8a8a60"/>
<rect x="302.2" y="469.6" width="1.3" height="1.3" fill="#7e8a34"/>
<rect x="126.8" y="469.6" width="1.3" height="1.3" fill="#7e8a34"/>
<rect x="557.1" y="462.2" width="1.3" height="1.3" fill="#8a9432"/>
<rect x="321.9" y="461.6" width="1.3" height="1.3" fill="#8a9432"/>
<rect x="368.5" y="469.6" width="1.3" height="1.3" fill="#9ca040"/>
<rect x="227.7" y="462.9" width="1.3" height="1.3" fill="#8a8a60"/>
<rect x="463.0" y="465.3" width="1.3" height="1.3" fill="#8a8a60"/>
<rect x="203.5" y="465.0" width="1.3" height="1.3" fill="#9ca040"/>
<rect x="212.9" y="465.1" width="1.3" height="1.3" fill="#7e8a34"/>
<rect x="289.7" y="469.7" width="1.3" height="1.3" fill="#7e8a34"/>
<rect x="143.3" y="467.6" width="1.3" height="1.3" fill="#9ca040"/>
<rect x="278.5" y="464.6" width="1.3" height="1.3" fill="#7e8a34"/>
<rect x="158.3" y="465.5" width="1.3" height="1.3" fill="#9ca040"/>
<rect x="223.2" y="460.8" width="1.3" height="1.3" fill="#8a8a60"/>
<rect x="392.7" y="462.1" width="1.3" height="1.3" fill="#9ca040"/>
<rect x="240.4" y="469.8" width="1.3" height="1.3" fill="#8a8a60"/>
<rect x="423.7" y="460.8" width="1.3" height="1.3" fill="#8a9432"/>
<rect x="89.0" y="461.0" width="1.3" height="1.3" fill="#9ca040"/>
<rect x="40.4" y="468.0" width="1.3" height="1.3" fill="#8a8a60"/>
<rect x="416.5" y="470.2" width="1.3" height="1.3" fill="#8a9432"/>
<rect x="387.2" y="467.4" width="1.3" height="1.3" fill="#8a8a60"/>
<rect x="412.2" y="466.8" width="1.3" height="1.3" fill="#7e8a34"/>
<rect x="138.9" y="462.7" width="1.3" height="1.3" fill="#9ca040"/>
<rect x="155.7" y="464.8" width="1.3" height="1.3" fill="#8a9432"/>
<rect x="132.1" y="464.0" width="1.3" height="1.3" fill="#7e8a34"/>
<rect x="39.5" y="468.6" width="1.3" height="1.3" fill="#8a9432"/>
<rect x="208.8" y="466.5" width="1.3" height="1.3" fill="#7e8a34"/>
<rect x="165.7" y="460.7" width="1.3" height="1.3" fill="#8a9432"/>
<rect x="91.3" y="471.1" width="1.3" height="1.3" fill="#9ca040"/>
<rect x="205.9" y="462.1" width="1.3" height="1.3" fill="#7e8a34"/>
<rect x="267.4" y="463.8" width="1.3" height="1.3" fill="#8a8a60"/>
<rect x="446.2" y="463.0" width="1.3" height="1.3" fill="#8a9432"/>
<rect x="484.5" y="469.0" width="1.3" height="1.3" fill="#9ca040"/>
<rect x="182.8" y="466.7" width="1.3" height="1.3" fill="#8a8a60"/>
<rect x="169.5" y="460.8" width="1.3" height="1.3" fill="#9ca040"/>
<rect x="99.0" y="461.5" width="1.3" height="1.3" fill="#8a8a60"/>
<rect x="200.1" y="467.6" width="1.3" height="1.3" fill="#8a8a60"/>
<rect x="148.7" y="462.9" width="1.3" height="1.3" fill="#9ca040"/>
<rect x="302.5" y="463.5" width="1.3" height="1.3" fill="#9ca040"/>
<rect x="496.4" y="468.0" width="1.3" height="1.3" fill="#8a8a60"/>
<rect x="306.9" y="463.7" width="1.3" height="1.3" fill="#8a8a60"/>
<rect x="292.1" y="468.2" width="1.3" height="1.3" fill="#8a8a60"/>
<rect x="74.9" y="465.2" width="1.3" height="1.3" fill="#8a9432"/>
<rect x="241.3" y="463.3" width="1.3" height="1.3" fill="#7e8a34"/>
<rect x="226.9" y="463.5" width="1.3" height="1.3" fill="#7e8a34"/>
<rect x="57.6" y="470.7" width="1.3" height="1.3" fill="#7e8a34"/>
<rect x="44.1" y="462.7" width="1.3" height="1.3" fill="#8a8a60"/>
<rect x="350.7" y="469.4" width="1.3" height="1.3" fill="#8a9432"/>
<rect x="437.8" y="462.9" width="1.3" height="1.3" fill="#8a8a60"/>
<rect x="275.4" y="465.3" width="1.3" height="1.3" fill="#8a8a60"/>
<rect x="249.5" y="465.7" width="1.3" height="1.3" fill="#7e8a34"/>
<rect x="323.7" y="470.3" width="1.3" height="1.3" fill="#9ca040"/>
<rect x="164.0" y="465.5" width="1.3" height="1.3" fill="#9ca040"/>
<rect x="259.1" y="468.1" width="1.3" height="1.3" fill="#8a9432"/>
<rect x="198.5" y="466.8" width="1.3" height="1.3" fill="#8a9432"/>
<rect x="269.3" y="464.4" width="1.3" height="1.3" fill="#9ca040"/>
<rect x="143.1" y="468.9" width="1.3" height="1.3" fill="#8a8a60"/>
<rect x="224.9" y="468.4" width="1.3" height="1.3" fill="#8a8a60"/>
<rect x="73.2" y="470.6" width="1.3" height="1.3" fill="#9ca040"/>
<rect x="115.1" y="467.7" width="1.3" height="1.3" fill="#7e8a34"/>
<rect x="430.5" y="467.8" width="1.3" height="1.3" fill="#9ca040"/>
<rect x="271.1" y="460.8" width="1.3" height="1.3" fill="#8a8a60"/>
<rect x="285.5" y="470.7" width="1.3" height="1.3" fill="#7e8a34"/>
<rect x="67.3" y="467.4" width="1.3" height="1.3" fill="#8a8a60"/>
<rect x="58.2" y="466.4" width="1.3" height="1.3" fill="#7e8a34"/>
<rect x="104.8" y="468.5" width="1.3" height="1.3" fill="#8a8a60"/>
<rect x="160.9" y="465.5" width="1.3" height="1.3" fill="#8a8a60"/>
<rect x="112.1" y="470.1" width="1.3" height="1.3" fill="#8a9432"/>
<rect x="369.7" y="463.8" width="1.3" height="1.3" fill="#7e8a34"/>
<rect x="184.0" y="467.7" width="1.3" height="1.3" fill="#7e8a34"/>
<rect x="136.4" y="467.1" width="1.3" height="1.3" fill="#8a9432"/>
<rect x="417.8" y="467.2" width="1.3" height="1.3" fill="#8a8a60"/>
<rect x="162.9" y="468.8" width="1.3" height="1.3" fill="#7e8a34"/>
<rect x="243.8" y="462.8" width="1.3" height="1.3" fill="#9ca040"/>
<rect x="172.2" y="461.5" width="1.3" height="1.3" fill="#7e8a34"/>
<rect x="345.0" y="467.5" width="1.3" height="1.3" fill="#9ca040"/>
<rect x="243.7" y="461.0" width="1.3" height="1.3" fill="#8a8a60"/>
<rect x="72.8" y="466.2" width="1.3" height="1.3" fill="#8a9432"/>
<rect x="365.7" y="464.2" width="1.3" height="1.3" fill="#7e8a34"/>
<rect x="394.6" y="465.2" width="1.3" height="1.3" fill="#8a8a60"/>
<rect x="161.2" y="462.2" width="1.3" height="1.3" fill="#9ca040"/>
<rect x="216.7" y="465.6" width="1.3" height="1.3" fill="#8a9432"/>
<rect x="231.5" y="466.9" width="1.3" height="1.3" fill="#8a9432"/>
<rect x="229.2" y="463.3" width="1.3" height="1.3" fill="#7e8a34"/>
<rect x="288.3" y="464.1" width="1.3" height="1.3" fill="#7e8a34"/>
<rect x="189.7" y="465.9" width="1.3" height="1.3" fill="#9ca040"/>
<rect x="230.2" y="462.6" width="1.3" height="1.3" fill="#8a8a60"/>
<rect x="134.6" y="464.4" width="1.3" height="1.3" fill="#7e8a34"/>
<rect x="407.2" y="462.3" width="1.3" height="1.3" fill="#9ca040"/>
<rect x="284.5" y="464.5" width="1.3" height="1.3" fill="#8a8a60"/>
<rect x="37.8" y="462.8" width="1.3" height="1.3" fill="#8a8a60"/>
<rect x="285.3" y="463.0" width="1.3" height="1.3" fill="#9ca040"/>
<rect x="211.5" y="467.5" width="1.3" height="1.3" fill="#8a9432"/>
<rect x="236.3" y="468.1" width="1.3" height="1.3" fill="#8a9432"/>
<rect x="316.9" y="470.3" width="1.3" height="1.3" fill="#8a8a60"/>
<rect x="84.8" y="466.6" width="1.3" height="1.3" fill="#7e8a34"/>
<rect x="156.0" y="463.8" width="1.3" height="1.3" fill="#7e8a34"/>
<rect x="437.7" y="465.9" width="1.3" height="1.3" fill="#8a8a60"/>
<rect x="233.6" y="466.6" width="1.3" height="1.3" fill="#8a8a60"/>
<rect x="122.5" y="463.9" width="1.3" height="1.3" fill="#7e8a34"/>
<rect x="396.9" y="464.3" width="1.3" height="1.3" fill="#8a8a60"/>
<rect x="184.8" y="461.8" width="1.3" height="1.3" fill="#9ca040"/>
<rect x="137.3" y="465.8" width="1.3" height="1.3" fill="#8a9432"/>
<rect x="282.4" y="462.1" width="1.3" height="1.3" fill="#7e8a34"/>
<rect x="275.2" y="468.5" width="1.3" height="1.3" fill="#7e8a34"/>
<rect x="508.2" y="469.1" width="1.3" height="1.3" fill="#8a8a60"/>
<rect x="520.7" y="470.1" width="1.3" height="1.3" fill="#8a8a60"/>
<rect x="182.5" y="464.0" width="1.3" height="1.3" fill="#8a9432"/>
<rect x="95.2" y="469.5" width="1.3" height="1.3" fill="#7e8a34"/>
<rect x="368.0" y="467.5" width="1.3" height="1.3" fill="#8a9432"/>
<rect x="364.2" y="470.1" width="1.3" height="1.3" fill="#7e8a34"/>
<rect x="169.2" y="462.1" width="1.3" height="1.3" fill="#8a8a60"/>
<rect x="401.9" y="463.3" width="1.3" height="1.3" fill="#8a9432"/>
<rect x="421.8" y="469.0" width="1.3" height="1.3" fill="#8a8a60"/>
<rect x="174.4" y="462.2" width="1.3" height="1.3" fill="#9ca040"/>
<rect x="78.4" y="464.4" width="1.3" height="1.3" fill="#8a8a60"/>
<rect x="276.2" y="464.5" width="1.3" height="1.3" fill="#9ca040"/>
<rect x="176.3" y="461.9" width="1.3" height="1.3" fill="#9ca040"/>
<rect x="438.9" y="466.4" width="1.3" height="1.3" fill="#7e8a34"/>
<rect x="122.2" y="466.7" width="1.3" height="1.3" fill="#7e8a34"/>
<rect x="77.1" y="461.4" width="1.3" height="1.3" fill="#7e8a34"/>
<rect x="446.5" y="468.4" width="1.3" height="1.3" fill="#8a8a60"/>
<rect x="46.4" y="462.1" width="1.3" height="1.3" fill="#8a9432"/>
<rect x="222.3" y="469.1" width="1.3" height="1.3" fill="#8a9432"/>
<rect x="290.9" y="470.5" width="1.3" height="1.3" fill="#7e8a34"/>
<rect x="150.9" y="466.2" width="1.3" height="1.3" fill="#9ca040"/>
<rect x="262.0" y="460.8" width="1.3" height="1.3" fill="#8a8a60"/>
<rect x="173.7" y="470.0" width="1.3" height="1.3" fill="#7e8a34"/>
<rect x="292.1" y="460.7" width="1.3" height="1.3" fill="#7e8a34"/>
<rect x="92.0" y="468.2" width="1.3" height="1.3" fill="#8a9432"/>
<rect x="260.2" y="465.4" width="1.3" height="1.3" fill="#7e8a34"/>
<rect x="76.0" y="464.4" width="1.3" height="1.3" fill="#8a9432"/>
<rect x="83.9" y="464.6" width="1.3" height="1.3" fill="#8a9432"/>
<rect x="278.0" y="464.6" width="1.3" height="1.3" fill="#9ca040"/>
<rect x="81.7" y="465.9" width="1.3" height="1.3" fill="#7e8a34"/>
<rect x="366.7" y="469.6" width="1.3" height="1.3" fill="#7e8a34"/>
<rect x="341.3" y="467.1" width="1.3" height="1.3" fill="#8a9432"/>
<rect x="243.8" y="470.6" width="1.3" height="1.3" fill="#8a8a60"/>
<rect x="346.1" y="467.1" width="1.3" height="1.3" fill="#9ca040"/>
<rect x="528.4" y="466.2" width="1.3" height="1.3" fill="#8a9432"/>
<rect x="78.5" y="470.8" width="1.3" height="1.3" fill="#8a8a60"/>
<rect x="137.2" y="471.2" width="1.3" height="1.3" fill="#9ca040"/>
<rect x="70.4" y="465.9" width="1.3" height="1.3" fill="#7e8a34"/>
<rect x="293.2" y="467.2" width="1.3" height="1.3" fill="#8a9432"/>
<rect x="286.5" y="469.8" width="1.3" height="1.3" fill="#8a8a60"/>
<rect x="186.5" y="470.4" width="1.3" height="1.3" fill="#8a8a60"/>
<rect x="149.8" y="470.6" width="1.3" height="1.3" fill="#8a8a60"/>
<rect x="129.2" y="466.2" width="1.3" height="1.3" fill="#9ca040"/>
<rect x="369.8" y="469.0" width="1.3" height="1.3" fill="#7e8a34"/>
<rect x="159.4" y="463.9" width="1.3" height="1.3" fill="#9ca040"/>
<rect x="145.4" y="464.9" width="1.3" height="1.3" fill="#9ca040"/>
<rect x="324.1" y="468.8" width="1.3" height="1.3" fill="#8a9432"/>
<rect x="167.2" y="466.4" width="1.3" height="1.3" fill="#7e8a34"/>
<rect x="36.7" y="467.5" width="1.3" height="1.3" fill="#9ca040"/>
<rect x="285.9" y="464.8" width="1.3" height="1.3" fill="#9ca040"/>
<rect x="155.4" y="461.9" width="1.3" height="1.3" fill="#8a8a60"/>
<rect x="93.2" y="470.0" width="1.3" height="1.3" fill="#7e8a34"/>
<rect x="187.1" y="466.3" width="1.3" height="1.3" fill="#8a9432"/>
<rect x="191.3" y="466.0" width="1.3" height="1.3" fill="#9ca040"/>
<rect x="150.0" y="466.1" width="1.3" height="1.3" fill="#9ca040"/>
<rect x="143.4" y="467.1" width="1.3" height="1.3" fill="#8a8a60"/>
<rect x="215.6" y="467.2" width="1.3" height="1.3" fill="#9ca040"/>
<rect x="82.0" y="464.8" width="1.3" height="1.3" fill="#7e8a34"/>
<rect x="299.1" y="460.8" width="1.3" height="1.3" fill="#8a8a60"/>
<rect x="170.2" y="466.3" width="1.3" height="1.3" fill="#8a9432"/>
<rect x="552.0" y="467.3" width="1.3" height="1.3" fill="#7e8a34"/>
<rect x="119.2" y="462.0" width="1.3" height="1.3" fill="#8a9432"/>
<rect x="68.6" y="470.0" width="1.3" height="1.3" fill="#8a9432"/>
<rect x="429.1" y="468.1" width="1.3" height="1.3" fill="#7e8a34"/>
<rect x="83.0" y="446.7" width="1.4" height="1.4" fill="#64644e"/>
<rect x="414.6" y="460.0" width="1.4" height="1.4" fill="#6e7448"/>
<rect x="183.8" y="451.0" width="1.4" height="1.4" fill="#7a7e4a"/>
<rect x="111.8" y="448.7" width="1.4" height="1.4" fill="#6e7448"/>
<rect x="98.6" y="418.9" width="1.4" height="1.4" fill="#7a7e4a"/>
<rect x="77.0" y="460.1" width="1.4" height="1.4" fill="#64644e"/>
<rect x="420.3" y="453.9" width="1.4" height="1.4" fill="#64644e"/>
<rect x="66.0" y="450.1" width="1.4" height="1.4" fill="#6e7448"/>
<rect x="52.8" y="457.4" width="1.4" height="1.4" fill="#64644e"/>
<rect x="61.0" y="451.7" width="1.4" height="1.4" fill="#64644e"/>
<rect x="66.0" y="433.1" width="1.4" height="1.4" fill="#64644e"/>
<rect x="123.1" y="450.0" width="1.4" height="1.4" fill="#64644e"/>
<rect x="303.9" y="458.9" width="1.4" height="1.4" fill="#64644e"/>
<rect x="115.3" y="458.3" width="1.4" height="1.4" fill="#6e7448"/>
<rect x="78.6" y="458.4" width="1.4" height="1.4" fill="#64644e"/>
<rect x="253.9" y="459.8" width="1.4" height="1.4" fill="#6e7448"/>
<rect x="306.8" y="445.2" width="1.4" height="1.4" fill="#64644e"/>
<rect x="245.6" y="453.1" width="1.4" height="1.4" fill="#6e7448"/>
<rect x="181.7" y="452.7" width="1.4" height="1.4" fill="#64644e"/>
<rect x="159.6" y="460.7" width="1.4" height="1.4" fill="#6e7448"/>
<rect x="134.7" y="441.7" width="1.4" height="1.4" fill="#7a7e4a"/>
<rect x="357.2" y="458.5" width="1.4" height="1.4" fill="#7a7e4a"/>
<rect x="166.1" y="458.6" width="1.4" height="1.4" fill="#6e7448"/>
<rect x="186.4" y="458.8" width="1.4" height="1.4" fill="#64644e"/>
<rect x="234.9" y="440.3" width="1.4" height="1.4" fill="#64644e"/>
<rect x="128.8" y="448.7" width="1.4" height="1.4" fill="#6e7448"/>
<rect x="103.5" y="457.1" width="1.4" height="1.4" fill="#64644e"/>
<rect x="233.2" y="437.7" width="1.4" height="1.4" fill="#6e7448"/>
<rect x="42.9" y="456.7" width="1.4" height="1.4" fill="#7a7e4a"/>
<rect x="205.2" y="450.9" width="1.4" height="1.4" fill="#6e7448"/>
<rect x="492.5" y="457.0" width="1.4" height="1.4" fill="#6e7448"/>
<rect x="352.9" y="457.3" width="1.4" height="1.4" fill="#7a7e4a"/>
<rect x="149.5" y="405.0" width="1.4" height="1.4" fill="#64644e"/>
<rect x="200.4" y="460.4" width="1.4" height="1.4" fill="#64644e"/>
<rect x="367.4" y="460.6" width="1.4" height="1.4" fill="#64644e"/>
<rect x="91.5" y="459.0" width="1.4" height="1.4" fill="#64644e"/>
<rect x="462.6" y="416.2" width="1.4" height="1.4" fill="#64644e"/>
<rect x="81.5" y="449.6" width="1.4" height="1.4" fill="#64644e"/>
<rect x="45.9" y="457.3" width="1.4" height="1.4" fill="#64644e"/>
<rect x="317.0" y="453.1" width="1.4" height="1.4" fill="#64644e"/>
<rect x="481.3" y="456.5" width="1.4" height="1.4" fill="#7a7e4a"/>
<rect x="258.4" y="459.6" width="1.4" height="1.4" fill="#7a7e4a"/>
<rect x="211.0" y="454.9" width="1.4" height="1.4" fill="#7a7e4a"/>
<rect x="451.4" y="404.5" width="1.4" height="1.4" fill="#7a7e4a"/>
<rect x="102.0" y="426.8" width="1.4" height="1.4" fill="#7a7e4a"/>
<rect x="295.0" y="431.7" width="1.4" height="1.4" fill="#64644e"/>
<rect x="237.1" y="442.9" width="1.4" height="1.4" fill="#6e7448"/>
<rect x="530.1" y="452.1" width="1.4" height="1.4" fill="#64644e"/>
<rect x="197.3" y="460.2" width="1.4" height="1.4" fill="#7a7e4a"/>
<rect x="208.4" y="443.1" width="1.4" height="1.4" fill="#6e7448"/>
<rect x="96.9" y="456.0" width="1.4" height="1.4" fill="#7a7e4a"/>
<rect x="135.7" y="457.4" width="1.4" height="1.4" fill="#7a7e4a"/>
<rect x="335.1" y="425.2" width="1.4" height="1.4" fill="#7a7e4a"/>
<rect x="81.5" y="453.9" width="1.4" height="1.4" fill="#6e7448"/>
<rect x="513.4" y="460.1" width="1.4" height="1.4" fill="#6e7448"/>
<rect x="58.2" y="456.4" width="1.4" height="1.4" fill="#6e7448"/>
<rect x="366.8" y="459.3" width="1.4" height="1.4" fill="#6e7448"/>
<rect x="75.4" y="443.8" width="1.4" height="1.4" fill="#6e7448"/>
<rect x="299.5" y="435.7" width="1.4" height="1.4" fill="#6e7448"/>
<rect x="406.7" y="444.1" width="1.4" height="1.4" fill="#7a7e4a"/>
<rect x="78.2" y="453.6" width="1.4" height="1.4" fill="#6e7448"/>
<rect x="180.2" y="435.0" width="1.4" height="1.4" fill="#64644e"/>
<rect x="416.7" y="450.6" width="1.4" height="1.4" fill="#6e7448"/>
<rect x="154.9" y="456.0" width="1.4" height="1.4" fill="#64644e"/>
<rect x="277.3" y="452.8" width="1.4" height="1.4" fill="#7a7e4a"/>
<rect x="86.6" y="448.5" width="1.4" height="1.4" fill="#7a7e4a"/>
<rect x="174.7" y="421.9" width="1.4" height="1.4" fill="#64644e"/>
<rect x="213.5" y="456.8" width="1.4" height="1.4" fill="#6e7448"/>
<rect x="222.7" y="449.6" width="1.4" height="1.4" fill="#6e7448"/>
<rect x="141.8" y="456.2" width="1.4" height="1.4" fill="#7a7e4a"/>
<rect x="517.1" y="439.0" width="1.4" height="1.4" fill="#6e7448"/>
<rect x="377.9" y="456.3" width="1.4" height="1.4" fill="#64644e"/>
<rect x="230.8" y="382.3" width="1.4" height="1.4" fill="#64644e"/>
<rect x="463.5" y="452.8" width="1.4" height="1.4" fill="#7a7e4a"/>
<rect x="238.4" y="457.4" width="1.4" height="1.4" fill="#6e7448"/>
<rect x="347.7" y="455.5" width="1.4" height="1.4" fill="#64644e"/>
<rect x="54.9" y="443.5" width="1.4" height="1.4" fill="#6e7448"/>
<rect x="273.3" y="447.0" width="1.4" height="1.4" fill="#6e7448"/>
<rect x="148.3" y="459.7" width="1.4" height="1.4" fill="#6e7448"/>
<rect x="105.4" y="438.4" width="1.4" height="1.4" fill="#6e7448"/>
<rect x="240.6" y="453.2" width="1.4" height="1.4" fill="#7a7e4a"/>
<rect x="76.3" y="456.8" width="1.4" height="1.4" fill="#6e7448"/>
<rect x="255.8" y="432.6" width="1.4" height="1.4" fill="#64644e"/>
<rect x="53.4" y="449.8" width="1.4" height="1.4" fill="#64644e"/>
<rect x="151.5" y="439.2" width="1.4" height="1.4" fill="#6e7448"/>
<rect x="265.6" y="460.1" width="1.4" height="1.4" fill="#6e7448"/>
<rect x="40.3" y="457.2" width="1.4" height="1.4" fill="#6e7448"/>
<rect x="364.0" y="440.0" width="1.4" height="1.4" fill="#6e7448"/>
<rect x="511.5" y="457.5" width="1.4" height="1.4" fill="#7a7e4a"/>
<rect x="254.3" y="452.8" width="1.4" height="1.4" fill="#7a7e4a"/>
<rect x="306.9" y="440.5" width="1.4" height="1.4" fill="#7a7e4a"/>
<rect x="116.3" y="447.9" width="1.4" height="1.4" fill="#6e7448"/>
<rect x="133.3" y="445.9" width="1.4" height="1.4" fill="#6e7448"/>
<rect x="293.6" y="460.9" width="1.4" height="1.4" fill="#7a7e4a"/>
<rect x="250.1" y="441.0" width="1.4" height="1.4" fill="#7a7e4a"/>
<rect x="469.4" y="457.4" width="1.4" height="1.4" fill="#64644e"/>
<rect x="344.1" y="460.4" width="1.4" height="1.4" fill="#7a7e4a"/>
<rect x="52.5" y="458.3" width="1.4" height="1.4" fill="#6e7448"/>
<rect x="46.0" y="456.0" width="1.4" height="1.4" fill="#7a7e4a"/>
<rect x="359.7" y="458.4" width="1.4" height="1.4" fill="#64644e"/>
<rect x="423.4" y="445.5" width="1.4" height="1.4" fill="#64644e"/>
<rect x="371.6" y="450.6" width="1.4" height="1.4" fill="#64644e"/>
<rect x="274.9" y="448.5" width="1.4" height="1.4" fill="#7a7e4a"/>
<rect x="65.3" y="454.9" width="1.4" height="1.4" fill="#6e7448"/>
<rect x="176.3" y="455.9" width="1.4" height="1.4" fill="#7a7e4a"/>
<rect x="227.4" y="453.6" width="1.4" height="1.4" fill="#64644e"/>
<rect x="297.0" y="448.7" width="1.4" height="1.4" fill="#64644e"/>
<rect x="142.6" y="451.7" width="1.4" height="1.4" fill="#6e7448"/>
<rect x="446.7" y="452.2" width="1.4" height="1.4" fill="#7a7e4a"/>
<rect x="170.8" y="437.5" width="1.4" height="1.4" fill="#6e7448"/>
<rect x="100.3" y="460.2" width="1.4" height="1.4" fill="#7a7e4a"/>
<rect x="48.3" y="455.6" width="1.4" height="1.4" fill="#7a7e4a"/>
<rect x="313.4" y="459.0" width="1.4" height="1.4" fill="#64644e"/>
<rect x="298.4" y="461.1" width="1.4" height="1.4" fill="#6e7448"/>
<rect x="294.0" y="451.7" width="1.4" height="1.4" fill="#7a7e4a"/>
<rect x="218.0" y="451.5" width="1.4" height="1.4" fill="#7a7e4a"/>
<rect x="137.1" y="451.7" width="1.4" height="1.4" fill="#7a7e4a"/>
<rect x="34.0" y="453.5" width="1.4" height="1.4" fill="#64644e"/>
<rect x="45.4" y="456.9" width="1.4" height="1.4" fill="#64644e"/>
<rect x="102.5" y="454.4" width="1.4" height="1.4" fill="#7a7e4a"/>
<rect x="43.9" y="450.5" width="1.4" height="1.4" fill="#64644e"/>
<rect x="174.9" y="458.4" width="1.4" height="1.4" fill="#6e7448"/>
<rect x="254.9" y="460.8" width="1.4" height="1.4" fill="#64644e"/>
<rect x="302.1" y="459.2" width="1.4" height="1.4" fill="#7a7e4a"/>
<rect x="206.0" y="458.9" width="1.4" height="1.4" fill="#64644e"/>
<rect x="198.7" y="456.6" width="1.4" height="1.4" fill="#6e7448"/>
<rect x="294.3" y="458.0" width="1.4" height="1.4" fill="#7a7e4a"/>
<rect x="237.0" y="449.3" width="1.4" height="1.4" fill="#6e7448"/>
<rect x="252.9" y="452.5" width="1.4" height="1.4" fill="#7a7e4a"/>
<rect x="111.2" y="445.7" width="1.4" height="1.4" fill="#7a7e4a"/>
<rect x="258.4" y="458.6" width="1.4" height="1.4" fill="#64644e"/>
<rect x="68.0" y="458.4" width="1.4" height="1.4" fill="#6e7448"/>
<rect x="389.0" y="457.4" width="1.4" height="1.4" fill="#6e7448"/>
<rect x="353.0" y="452.9" width="1.4" height="1.4" fill="#64644e"/>
<rect x="127.1" y="431.1" width="1.4" height="1.4" fill="#7a7e4a"/>
<rect x="280.6" y="459.8" width="1.4" height="1.4" fill="#6e7448"/>
<rect x="72.2" y="460.2" width="1.4" height="1.4" fill="#64644e"/>
<rect x="185.6" y="454.3" width="1.4" height="1.4" fill="#6e7448"/>
<rect x="114.4" y="450.3" width="1.4" height="1.4" fill="#7a7e4a"/>
<rect x="117.5" y="442.6" width="1.4" height="1.4" fill="#64644e"/>
<rect x="265.9" y="458.1" width="1.4" height="1.4" fill="#7a7e4a"/>
<rect x="89.3" y="460.4" width="1.4" height="1.4" fill="#64644e"/>
<rect x="162.9" y="441.9" width="1.4" height="1.4" fill="#64644e"/>
<rect x="474.2" y="458.2" width="1.4" height="1.4" fill="#7a7e4a"/>
<rect x="227.8" y="457.9" width="1.4" height="1.4" fill="#7a7e4a"/>
<rect x="140.6" y="438.5" width="1.4" height="1.4" fill="#6e7448"/>
<rect x="129.8" y="451.9" width="1.4" height="1.4" fill="#64644e"/>
<rect x="109.4" y="459.9" width="1.4" height="1.4" fill="#64644e"/>
<rect x="528.8" y="457.2" width="1.4" height="1.4" fill="#7a7e4a"/>
<rect x="543.4" y="373.9" width="1.4" height="1.4" fill="#6e7448"/>
<rect x="260.1" y="452.7" width="1.4" height="1.4" fill="#64644e"/>
<rect x="48.9" y="451.6" width="1.4" height="1.4" fill="#7a7e4a"/>
<rect x="69.0" y="448.3" width="1.4" height="1.4" fill="#6e7448"/>
<rect x="92.9" y="441.1" width="1.4" height="1.4" fill="#6e7448"/>
<rect x="160.1" y="457.8" width="1.4" height="1.4" fill="#7a7e4a"/>
<rect x="256.3" y="446.4" width="1.4" height="1.4" fill="#6e7448"/>
<rect x="379.1" y="458.8" width="1.4" height="1.4" fill="#6e7448"/>
<rect x="174.1" y="452.9" width="1.4" height="1.4" fill="#64644e"/>
<rect x="170.9" y="453.3" width="1.4" height="1.4" fill="#6e7448"/>
<rect x="283.3" y="459.6" width="1.4" height="1.4" fill="#7a7e4a"/>
<rect x="234.0" y="442.9" width="1.4" height="1.4" fill="#6a6e50"/>
<rect x="156.2" y="455.3" width="1.4" height="1.4" fill="#74784e"/>
<rect x="182.9" y="422.1" width="1.4" height="1.4" fill="#74784e"/>
<rect x="157.7" y="441.1" width="1.4" height="1.4" fill="#6a6e50"/>
<rect x="79.9" y="430.3" width="1.4" height="1.4" fill="#74784e"/>
<rect x="193.5" y="443.1" width="1.4" height="1.4" fill="#74784e"/>
<rect x="173.1" y="430.1" width="1.4" height="1.4" fill="#6a6e50"/>
<rect x="129.5" y="444.5" width="1.4" height="1.4" fill="#6a6e50"/>
<rect x="162.4" y="444.8" width="1.4" height="1.4" fill="#74784e"/>
<rect x="234.7" y="425.6" width="1.4" height="1.4" fill="#6a6e50"/>
<rect x="60.9" y="423.8" width="1.4" height="1.4" fill="#6a6e50"/>
<rect x="61.6" y="422.3" width="1.4" height="1.4" fill="#6a6e50"/>
<rect x="145.0" y="433.5" width="1.4" height="1.4" fill="#74784e"/>
<rect x="84.8" y="420.7" width="1.4" height="1.4" fill="#74784e"/>
<rect x="154.6" y="421.7" width="1.4" height="1.4" fill="#74784e"/>
<rect x="204.8" y="441.6" width="1.4" height="1.4" fill="#74784e"/>
<rect x="54.0" y="420.3" width="1.4" height="1.4" fill="#6a6e50"/>
<rect x="65.4" y="411.2" width="1.4" height="1.4" fill="#6a6e50"/>
<rect x="154.8" y="444.3" width="1.4" height="1.4" fill="#74784e"/>
<rect x="131.3" y="417.7" width="1.4" height="1.4" fill="#74784e"/>
<rect x="121.0" y="415.4" width="1.4" height="1.4" fill="#74784e"/>
<rect x="121.6" y="412.1" width="1.4" height="1.4" fill="#74784e"/>
<rect x="132.2" y="457.3" width="1.4" height="1.4" fill="#74784e"/>
<rect x="214.8" y="421.0" width="1.4" height="1.4" fill="#74784e"/>
<rect x="107.6" y="456.9" width="1.4" height="1.4" fill="#74784e"/>
<rect x="83.3" y="252.9" width="1.3" height="1.3" fill="#666658"/>
<rect x="480.2" y="301.5" width="1.3" height="1.3" fill="#666658"/>
<rect x="184.3" y="415.0" width="1.3" height="1.3" fill="#666658"/>
<rect x="514.8" y="413.3" width="1.3" height="1.3" fill="#5a5a50"/>
<rect x="457.6" y="386.8" width="1.3" height="1.3" fill="#5a5a50"/>
<rect x="171.3" y="301.7" width="1.3" height="1.3" fill="#666658"/>
<rect x="301.6" y="398.7" width="1.3" height="1.3" fill="#666658"/>
<rect x="372.5" y="263.9" width="1.3" height="1.3" fill="#666658"/>
<rect x="320.9" y="405.2" width="1.3" height="1.3" fill="#5a5a50"/>
<rect x="490.2" y="331.9" width="1.3" height="1.3" fill="#666658"/>
<rect x="85.2" y="300.4" width="1.3" height="1.3" fill="#666658"/>
<rect x="304.4" y="298.8" width="1.3" height="1.3" fill="#666658"/>
<rect x="44.5" y="285.0" width="1.3" height="1.3" fill="#5a5a50"/>
<rect x="464.0" y="284.3" width="1.3" height="1.3" fill="#5a5a50"/>
<rect x="429.8" y="393.2" width="1.3" height="1.3" fill="#5a5a50"/>
<rect x="244.0" y="246.7" width="1.3" height="1.3" fill="#5a5a50"/>
<rect x="328.2" y="286.7" width="1.3" height="1.3" fill="#666658"/>
<rect x="49.4" y="322.7" width="1.3" height="1.3" fill="#5a5a50"/>
<rect x="454.5" y="360.7" width="1.3" height="1.3" fill="#666658"/>
<rect x="40.7" y="347.6" width="1.3" height="1.3" fill="#5a5a50"/>
<rect x="421.8" y="315.3" width="1.3" height="1.3" fill="#5a5a50"/>
<rect x="408.7" y="420.6" width="1.3" height="1.3" fill="#666658"/>
<polyline points="33.8,171.8 35.5,172.8 37.3,176.5 39.0,174.6 40.8,174.2 42.5,174.0 44.3,173.6 46.0,173.4 47.8,173.1 49.5,174.3 51.3,173.5 53.1,173.9 54.8,174.0 56.6,174.4 58.3,175.3 60.1,175.6 61.8,174.0 63.6,174.4 65.3,174.7 67.1,176.0 68.8,175.1 70.6,175.8 72.4,176.4 74.1,175.5 75.9,175.0 77.6,175.5 79.4,176.1 81.1,174.8 82.9,174.1 84.6,174.9 86.4,175.7 88.1,175.3 89.9,175.2 91.7,175.8 93.4,176.3 95.2,174.6 96.9,175.0 98.7,174.7 100.4,174.1 102.2,174.3 103.9,173.9 105.7,173.5 107.4,174.1 109.2,173.5 111.0,173.3 112.7,174.2 114.5,175.1 116.2,174.0 118.0,174.1 119.7,174.6 121.5,173.9 123.2,173.1 125.0,175.0 126.7,174.6 128.5,173.9 130.3,174.4 132.0,174.1 133.8,175.6 135.5,175.6 137.3,176.2 139.0,175.9 140.8,174.8 142.5,174.3 144.3,173.6 146.1,174.1 147.8,174.0 149.6,175.4 151.3,175.2 153.1,175.4 154.8,174.3 156.6,173.8 158.3,173.1 160.1,173.3 161.8,173.0 163.6,174.6 165.4,175.3 167.1,174.5 168.9,175.2 170.6,174.0 172.4,174.4 174.1,174.8 175.9,175.5 177.6,174.4 179.4,175.4 181.1,175.2 182.9,173.8 184.7,174.0 186.4,173.1 188.2,174.4 189.9,174.8 191.7,173.8 193.4,173.6 195.2,175.1 196.9,175.1 198.7,174.5 200.4,174.6 202.2,175.5 204.0,176.4 205.7,176.1 207.5,176.0 209.2,176.7 211.0,176.1 212.7,175.3 214.5,174.0 216.2,175.4 218.0,174.5 219.7,175.1 221.5,174.8 223.3,173.9 225.0,174.1 226.8,174.2 228.5,174.1 230.3,173.9 232.0,173.3 233.8,173.3 235.5,172.8 237.3,174.9 239.0,173.8 240.8,175.2 242.6,175.9 244.3,175.6 246.1,176.1 247.8,176.4 249.6,174.5 251.3,173.9 253.1,173.2 254.8,172.9 256.6,173.4 258.4,172.8 260.1,173.7 261.9,175.2 263.6,174.7 265.4,174.2 267.1,175.1 268.9,175.6 270.6,176.5 272.4,175.9 274.1,174.5 275.9,175.0 277.7,176.1 279.4,175.8 281.2,175.7 282.9,176.0 284.7,174.7 286.4,173.9 288.2,175.5 289.9,174.5 291.7,173.7 293.4,173.3 295.2,173.4 297.0,174.7 298.7,173.9 300.5,174.6 302.2,173.8 304.0,173.6 305.7,173.8 307.5,173.5 309.2,173.7 311.0,175.2 312.7,175.6 314.5,175.3 316.3,174.4 318.0,175.7 319.8,174.3 321.5,173.9 323.3,175.5 325.0,174.4 326.8,175.2 328.5,176.1 330.3,176.2 332.0,174.4 333.8,174.3 335.6,173.9 337.3,173.3 339.1,173.9 340.8,175.1 342.6,174.7 344.3,173.9 346.1,173.8 347.8,173.5 349.6,175.1 351.3,174.5 353.1,175.5 354.9,174.9 356.6,174.0 358.4,174.7 360.1,175.6 361.9,174.9 363.6,175.4 365.4,175.1 367.1,174.5 368.9,173.4 370.6,174.0 372.4,173.9 374.2,173.7 375.9,173.4 377.7,173.6 379.4,175.1 381.2,174.8 382.9,175.1 384.7,174.1 386.4,174.2 388.2,173.7 390.0,173.0 391.7,173.8 393.5,174.6 395.2,173.8 397.0,173.2 398.7,173.3 400.5,174.8 402.2,174.7 404.0,173.8 405.7,173.3 407.5,173.3 409.3,173.2 411.0,172.7 412.8,174.7 414.5,175.2 416.3,175.5 418.0,175.5 419.8,176.4 421.5,176.3 423.3,175.4 425.0,175.5 426.8,176.1 428.6,176.7 430.3,175.4 432.1,175.5 433.8,175.3 435.6,174.8 437.3,175.2 439.1,176.2 440.8,174.8 442.6,175.5 444.3,175.8 446.1,175.3 447.9,174.4 449.6,175.4 451.4,176.3 453.1,174.8 454.9,176.0 456.6,175.3 458.4,174.4 460.1,173.5 461.9,175.3 463.6,176.0 465.4,176.3 467.2,175.2 468.9,175.2 470.7,175.3 472.4,175.4 474.2,176.1 475.9,174.2 477.7,174.8 479.4,175.6 481.2,175.8 482.9,176.1 484.7,174.3 486.5,175.6 488.2,176.2 490.0,176.6 491.7,176.3 493.5,175.1 495.2,175.8 497.0,175.4 498.7,175.8 500.5,176.4 502.3,176.6 504.0,175.5 505.8,175.0 507.5,174.3 509.3,173.6 511.0,173.2 512.8,174.2 514.5,174.5 516.3,175.2 518.0,174.4 519.8,173.6 521.6,174.9 523.3,174.6 525.1,174.9 526.8,174.5 528.6,174.3 530.3,174.4 532.1,173.4 533.8,174.8 535.6,175.7 537.3,175.7 539.1,176.3 540.9,175.6 542.6,174.3 544.4,175.0 546.1,175.6 547.9,174.9 549.6,174.5 551.4,175.8 553.1,174.5 554.9,174.5 556.6,175.1 558.4,175.4 560.2,175.5 561.9,175.2 563.7,175.0 565.4,175.7 567.2,175.6 568.9,176.2 570.7,175.1 572.4,175.0 574.2,174.4 575.9,173.5 577.7,174.4 579.5,173.8 581.2,173.2 583.0,174.7 584.7,174.3 586.5,174.6 588.2,174.4 590.0,174.3 591.7,174.7 593.5,174.9 595.2,174.3" fill="none" stroke="#a8601e" stroke-width="1" stroke-linejoin="round"/>
</svg>
<div class="a" style="left:33px;top:126px;width:563px;height:1px;background:#222"></div>
<div class="a" style="left:33px;top:126px;width:1px;height:393px;background:#111"></div>
<div class="a" style="left:595px;top:126px;width:1px;height:393px;background:#222"></div>
<div class="a" style="left:33px;top:517px;width:563px;height:2px;background:#111"></div>
<div class="a" style="left:34px;top:117px;font-size:8px;color:#333">MB/s</div>
<div class="a" style="left:584px;top:117px;font-size:8px;color:#333">ms</div>
<div class="yl" style="top:465.3px">50</div>
<div class="yr" style="top:465.3px">0.05</div>
<div class="yl" style="top:416.4px">100</div>
<div class="yr" style="top:416.4px">0.10</div>
<div class="yl" style="top:367.6px">150</div>
<div class="yr" style="top:367.6px">0.15</div>
<div class="yl" style="top:318.7px">200</div>
<div class="yr" style="top:318.7px">0.20</div>
<div class="yl" style="top:269.8px">250</div>
<div class="yr" style="top:269.8px">0.25</div>
<div class="yl" style="top:220.9px">300</div>
<div class="yr" style="top:220.9px">0.30</div>
<div class="yl" style="top:172.1px">350</div>
<div class="yr" style="top:172.1px">0.35</div>
<div class="yl" style="top:123.2px">400</div>
<div class="yr" style="top:123.2px">0.40</div>
<div class="xl" style="left:3.8px">0</div>
<div class="xl" style="left:59.9px">100</div>
<div class="xl" style="left:116.1px">200</div>
<div class="xl" style="left:172.2px">300</div>
<div class="xl" style="left:228.4px">400</div>
<div class="xl" style="left:284.5px">500</div>
<div class="xl" style="left:340.6px">600</div>
<div class="xl" style="left:396.8px">700</div>
<div class="xl" style="left:452.9px">800</div>
<div class="xl" style="left:509.1px">900</div>
<div class="xl" style="left:579.5px;width:auto;text-align:left">1000gB</div>
<!-- right panel -->
<div class="a" style="left:627px;top:112px;width:65px;height:21px;border:1.5px solid #7aaee4;border-radius:3px;background:#fff;text-align:center;line-height:18px;font-size:9px;color:#222;-webkit-text-stroke:0.25px #222">开始</div>
<div class="sep" style="top:143px"></div>
<div class="a" style="left:624px;top:152px;width:9px;height:9px;border:1px solid #9a9a9a;border-radius:50%;background:#fff"></div>
<div class="lbl" style="left:637px;top:150px">读取</div>
<div class="a" style="left:624px;top:167px;width:9.5px;height:9.5px;border:3px solid #1a62bc;border-radius:50%;background:#fff"></div>
<div class="lbl" style="left:637px;top:165.5px">写入</div>
<div class="sep" style="top:180px"></div>
<div class="cb" style="top:190px"><svg width="9" height="9"><path d="M2.2 4.6 L3.9 6.2 L6.9 3" stroke="#fff" stroke-width="1" fill="none"/></svg></div>
<div class="lbl" style="left:637px;top:188.5px">短行程</div>
<div class="a" style="left:625px;top:207px;width:41px;height:19px;background:#fff;border-bottom:1px solid #c4c4c4"></div>
<div class="a" style="left:628px;top:210px;font-size:9px;color:#222">1000</div>
<div class="a" style="left:665px;top:207px;width:13px;height:19px;background:#f0f0f0;border:1px solid #d4d4d4"></div><div class="a" style="left:666px;top:216px;width:11px;height:1px;background:#d8d8d8"></div><svg class="a" style="left:668px;top:210px" width="7" height="14"><path d="M1.5 3.5 H5.5 L3.5 1 Z M1.5 9.5 H5.5 L3.5 12 Z" fill="#333"/></svg>
<div class="a" style="left:688px;top:212px;font-size:9px;color:#444">GB</div>
<div class="cb" style="top:237px"><svg width="9" height="9"><path d="M2.2 4.6 L3.9 6.2 L6.9 3" stroke="#fff" stroke-width="1" fill="none"/></svg></div>
<div class="lbl" style="left:637px;top:236px">传输速率</div>
<div class="sep" style="top:250px"></div>
<div class="lbl" style="top:252.5px">最小</div>
<div class="box" style="top:267px;color:#3ab8e8">347.7 MB/s</div>
<div class="lbl" style="top:285px">最大</div>
<div class="box" style="top:299px;color:#3ab8e8">354.3 MB/s</div>
<div class="lbl" style="top:315px">平均</div>
<div class="box" style="top:328px;color:#3ab8e8">351.5 MB/s</div>
<div class="sep" style="top:350px"></div>
<div class="cb" style="top:358px"><svg width="9" height="9"><path d="M2.2 4.6 L3.9 6.2 L6.9 3" stroke="#fff" stroke-width="1" fill="none"/></svg></div>
<div class="lbl" style="left:637px;top:356.5px">访问时间</div>
<div class="box" style="top:371px;color:#e8e830">0.061 ms</div>
<div class="cb" style="top:391px"><svg width="9" height="9"><path d="M2.2 4.6 L3.9 6.2 L6.9 3" stroke="#fff" stroke-width="1" fill="none"/></svg></div>
<div class="lbl" style="left:637px;top:390px">突发速率</div>
<div class="box" style="top:404px;color:#fff">277.5 MB/s</div>
<div class="lbl" style="top:421px">CPU 使用率</div>
<div class="box" style="top:436px;color:#fff">2.2%</div>
<div class="lbl" style="top:465px">通过次数</div>
<div class="a" style="left:625px;top:478px;width:54px;height:19px;background:#fff;border-bottom:1px solid #c4c4c4"></div>
<div class="a" style="left:628px;top:480.5px;font-size:10px;color:#222">1</div>
<div class="a" style="left:678px;top:478px;width:13px;height:19px;background:#f0f0f0;border:1px solid #d4d4d4"></div><div class="a" style="left:679px;top:487px;width:11px;height:1px;background:#d8d8d8"></div><svg class="a" style="left:681px;top:481px" width="7" height="14"><path d="M1.5 3.5 H5.5 L3.5 1 Z M1.5 9.5 H5.5 L3.5 12 Z" fill="#333"/></svg>
<div class="a" style="left:625px;top:505px;width:46px;height:11px;background:#0b7d0b"></div>
<div class="a" style="left:676px;top:506px;font-size:9.5px;color:#3a3a3a">1/1</div>
</body></html>
